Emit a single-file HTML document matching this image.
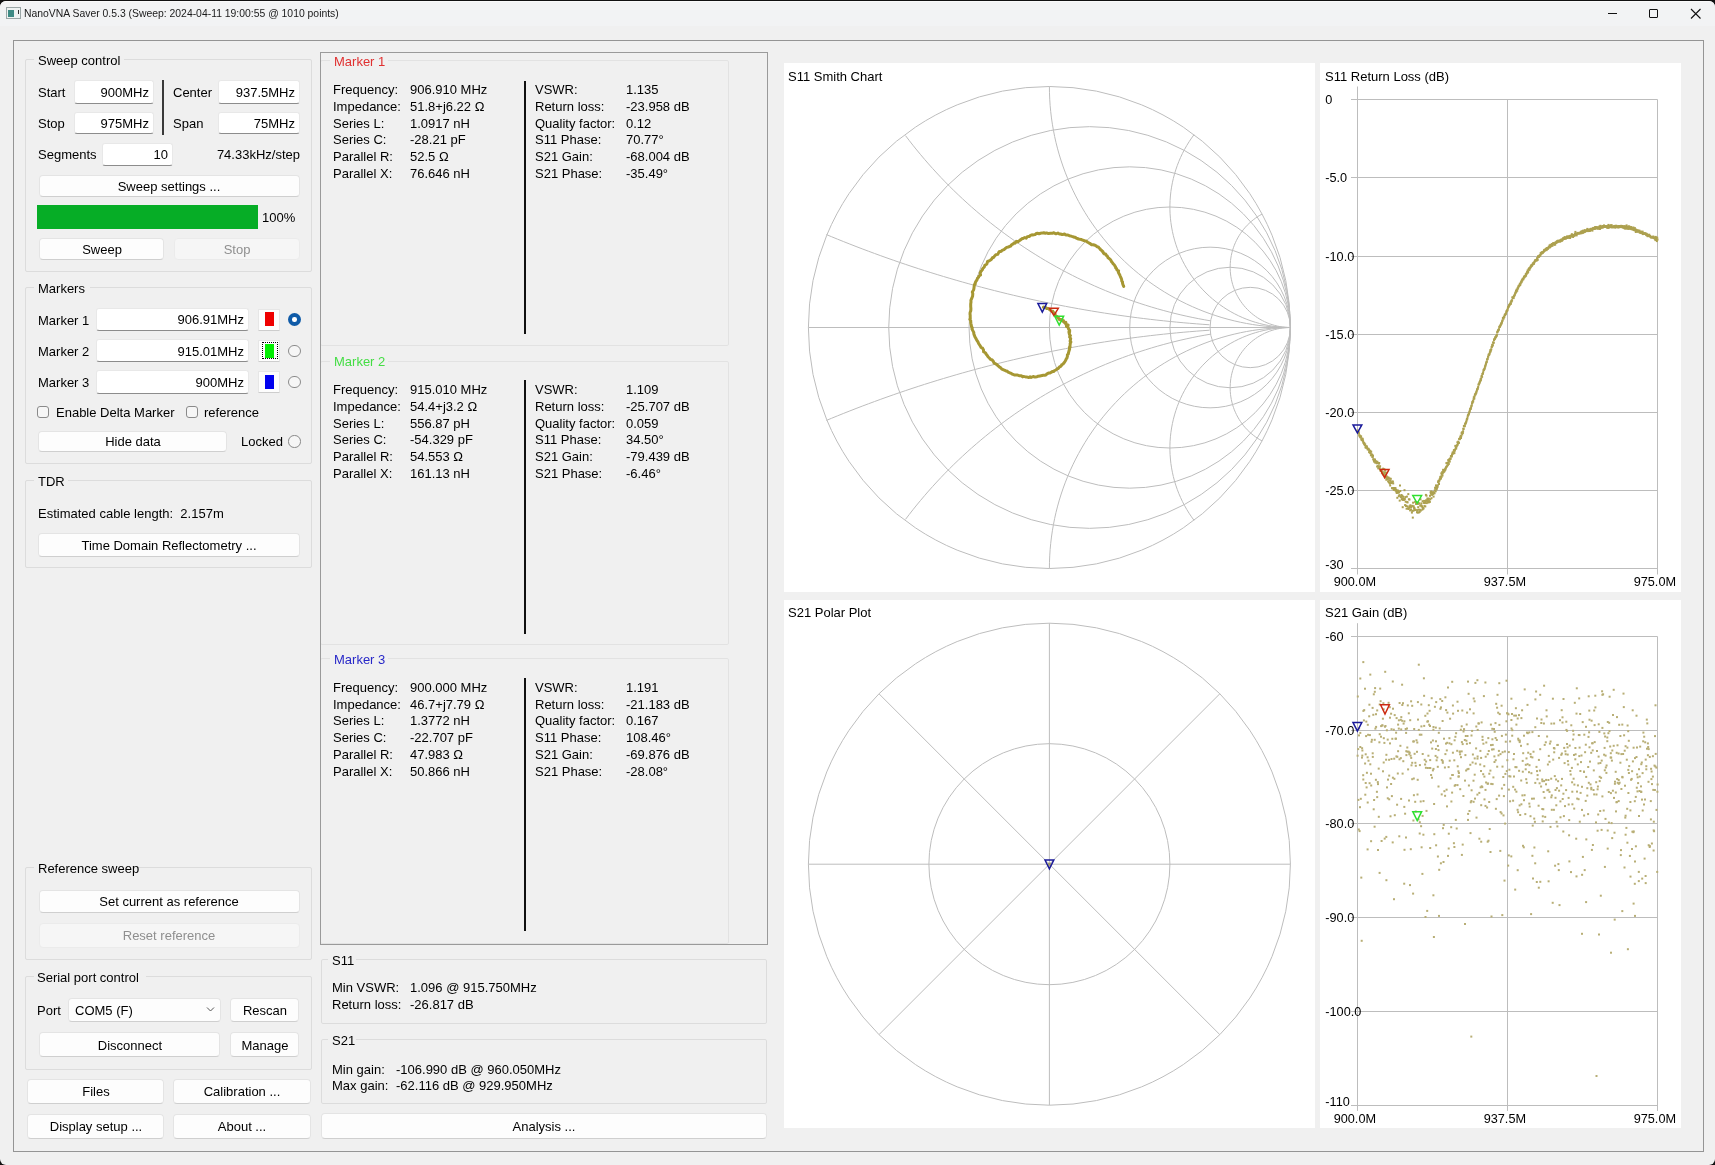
<!DOCTYPE html><html><head><meta charset="utf-8"><style>
html,body{margin:0;padding:0;width:1715px;height:1165px;overflow:hidden;background:#f0f0f0}
body{position:relative;font-family:"Liberation Sans", sans-serif;}
.t{position:absolute;white-space:nowrap;will-change:transform}
.b{position:absolute;}
</style></head><body>
<div class="b" style="left:0;top:0;width:1715px;height:1165px;background:#111"></div>
<div class="b" style="left:0;top:1px;width:1715px;height:1164px;background:#f0f0f0;border-radius:6px;overflow:hidden"><div style="height:1px;background:#fafafa"></div><div style="height:24px;background:#f2f3f4"></div></div>
<div class="b" style="left:6px;top:7px;width:15px;height:12px;background:#eef2f2;border:1px solid #9aa6a6;box-sizing:border-box;"></div>
<div class="b" style="left:8px;top:10px;width:6px;height:7px;background:#3d8a84;"></div>
<div class="b" style="left:18px;top:10px;width:1px;height:4px;background:#333;"></div>
<div class="t" style="left:24.3px;top:8.30px;font-size:10.4px;line-height:12px;color:#1a1a1a;">NanoVNA Saver 0.5.3 (Sweep: 2024-04-11 19:00:55 @ 1010 points)</div>
<div class="b" style="left:1608px;top:13px;width:9px;height:1px;background:#111;"></div>
<div class="b" style="left:1649px;top:9px;width:9px;height:9px;border:1.2px solid #111;border-radius:1px;box-sizing:border-box;"></div>
<svg class="b" style="left:1690px;top:8px" width="12" height="12"><path d="M1 1L10.5 10.5M10.5 1L1 10.5" stroke="#111" stroke-width="1.1"/></svg>
<div class="b" style="left:13px;top:40px;width:1691px;height:1112px;border:1px solid #949494;box-sizing:border-box;"></div>
<div class="b" style="left:25px;top:59px;width:287px;height:213px;border:1px solid #dcdcdc;border-radius:2px;box-sizing:border-box;"></div>
<div class="b" style="left:34px;top:57px;width:90px;height:5px;background:#f0f0f0;"></div>
<div class="t" style="left:37.5px;top:52.90px;font-size:13px;line-height:16px;color:#000;">Sweep control</div>
<div class="t" style="left:37.5px;top:84.90px;font-size:13px;line-height:16px;color:#000;">Start</div>
<div class="b" style="left:74px;top:80px;width:80px;height:24px;background:#fff;border:1px solid #e8e8e8;border-bottom:1px solid #8c8c8c;border-radius:3px;box-sizing:border-box;"></div>
<div class="t" style="left:-251.0px;width:400px;text-align:right;top:84.65px;font-size:13px;line-height:16px;color:#000;">900MHz</div>
<div class="t" style="left:37.5px;top:116.40px;font-size:13px;line-height:16px;color:#000;">Stop</div>
<div class="b" style="left:74px;top:112px;width:80px;height:22px;background:#fff;border:1px solid #e8e8e8;border-bottom:1px solid #8c8c8c;border-radius:3px;box-sizing:border-box;"></div>
<div class="t" style="left:-251.0px;width:400px;text-align:right;top:116.05px;font-size:13px;line-height:16px;color:#000;">975MHz</div>
<div class="b" style="left:162px;top:80px;width:2px;height:55px;background:#3a3a3a;"></div>
<div class="t" style="left:172.6px;top:84.90px;font-size:13px;line-height:16px;color:#000;">Center</div>
<div class="b" style="left:218px;top:80px;width:82px;height:24px;background:#fff;border:1px solid #e8e8e8;border-bottom:1px solid #8c8c8c;border-radius:3px;box-sizing:border-box;"></div>
<div class="t" style="left:-105.0px;width:400px;text-align:right;top:84.65px;font-size:13px;line-height:16px;color:#000;">937.5MHz</div>
<div class="t" style="left:172.6px;top:116.40px;font-size:13px;line-height:16px;color:#000;">Span</div>
<div class="b" style="left:218px;top:112px;width:82px;height:22px;background:#fff;border:1px solid #e8e8e8;border-bottom:1px solid #8c8c8c;border-radius:3px;box-sizing:border-box;"></div>
<div class="t" style="left:-105.0px;width:400px;text-align:right;top:116.05px;font-size:13px;line-height:16px;color:#000;">75MHz</div>
<div class="t" style="left:37.5px;top:147.20px;font-size:13px;line-height:16px;color:#000;">Segments</div>
<div class="b" style="left:102px;top:143px;width:71px;height:23px;background:#fff;border:1px solid #e8e8e8;border-bottom:1px solid #8c8c8c;border-radius:3px;box-sizing:border-box;"></div>
<div class="t" style="left:-232.0px;width:400px;text-align:right;top:147.20px;font-size:13px;line-height:16px;color:#000;">10</div>
<div class="t" style="left:-99.9px;width:400px;text-align:right;top:147.20px;font-size:13px;line-height:16px;color:#000;">74.33kHz/step</div>
<div class="b" style="left:39px;top:175px;width:261px;height:22px;background:#fdfdfd;border:1px solid #e4e4e4;border-bottom-color:#cfcfcf;border-radius:4px;box-sizing:border-box;"></div>
<div class="t" style="left:-30.9px;width:400px;text-align:center;top:178.70px;font-size:13px;line-height:16px;color:#000;">Sweep settings ...</div>
<div class="b" style="left:37px;top:205px;width:221px;height:24px;background:#06ad26;"></div>
<div class="t" style="left:262.0px;top:209.70px;font-size:13px;line-height:16px;color:#000;">100%</div>
<div class="b" style="left:39px;top:238px;width:125px;height:22px;background:#fdfdfd;border:1px solid #e4e4e4;border-bottom-color:#cfcfcf;border-radius:4px;box-sizing:border-box;"></div>
<div class="t" style="left:-98.3px;width:400px;text-align:center;top:241.50px;font-size:13px;line-height:16px;color:#000;">Sweep</div>
<div class="b" style="left:174px;top:238px;width:126px;height:22px;background:#f6f6f6;border:1px solid #ebebeb;border-radius:4px;box-sizing:border-box;"></div>
<div class="t" style="left:36.7px;width:400px;text-align:center;top:241.50px;font-size:13px;line-height:16px;color:#8f8f8f;">Stop</div>
<div class="b" style="left:25px;top:287px;width:287px;height:177px;border:1px solid #dcdcdc;border-radius:2px;box-sizing:border-box;"></div>
<div class="b" style="left:34px;top:285px;width:56px;height:5px;background:#f0f0f0;"></div>
<div class="t" style="left:37.5px;top:281.10px;font-size:13px;line-height:16px;color:#000;">Markers</div>
<div class="t" style="left:37.5px;top:312.90px;font-size:13px;line-height:16px;color:#000;">Marker 1</div>
<div class="b" style="left:96px;top:308px;width:153px;height:23px;background:#fff;border:1px solid #e8e8e8;border-bottom:1px solid #8c8c8c;border-radius:3px;box-sizing:border-box;"></div>
<div class="t" style="left:-155.7px;width:400px;text-align:right;top:312.45px;font-size:13px;line-height:16px;color:#000;">906.91MHz</div>
<div class="b" style="left:258px;top:309px;width:22px;height:22px;background:#fdfdfd;border:1px solid #e6e6e6;border-bottom-color:#cdcdcd;border-radius:1px;box-sizing:border-box;"></div>
<div class="b" style="left:265px;top:312px;width:9px;height:14px;background:#ee0000;"></div>
<div class="b" style="left:288.1px;top:313.1px;width:13px;height:13px;border-radius:50%;background:#0f5ba8;"></div>
<div class="b" style="left:292.3px;top:317.3px;width:4.6px;height:4.6px;border-radius:50%;background:#fff;"></div>
<div class="t" style="left:37.5px;top:344.20px;font-size:13px;line-height:16px;color:#000;">Marker 2</div>
<div class="b" style="left:96px;top:339px;width:153px;height:23px;background:#fff;border:1px solid #e8e8e8;border-bottom:1px solid #8c8c8c;border-radius:3px;box-sizing:border-box;"></div>
<div class="t" style="left:-155.7px;width:400px;text-align:right;top:343.65px;font-size:13px;line-height:16px;color:#000;">915.01MHz</div>
<div class="b" style="left:258px;top:340px;width:22px;height:22px;background:#fdfdfd;border:1px solid #e6e6e6;border-bottom-color:#cdcdcd;border-radius:1px;box-sizing:border-box;"></div>
<div class="b" style="left:265px;top:344px;width:9px;height:14px;background:#00ee00;"></div>
<div class="b" style="left:288.4px;top:344.7px;width:12.4px;height:12.4px;border-radius:50%;border:1px solid #8a8a8a;box-sizing:border-box;background:#f6f6f6"></div>
<div class="b" style="left:262px;top:342px;width:16px;height:17px;border:1px dotted #000;box-sizing:border-box;"></div>
<div class="t" style="left:37.5px;top:375.00px;font-size:13px;line-height:16px;color:#000;">Marker 3</div>
<div class="b" style="left:96px;top:370px;width:153px;height:24px;background:#fff;border:1px solid #e8e8e8;border-bottom:1px solid #8c8c8c;border-radius:3px;box-sizing:border-box;"></div>
<div class="t" style="left:-155.7px;width:400px;text-align:right;top:374.80px;font-size:13px;line-height:16px;color:#000;">900MHz</div>
<div class="b" style="left:258px;top:371px;width:22px;height:22px;background:#fdfdfd;border:1px solid #e6e6e6;border-bottom-color:#cdcdcd;border-radius:1px;box-sizing:border-box;"></div>
<div class="b" style="left:265px;top:375px;width:9px;height:14px;background:#0000ee;"></div>
<div class="b" style="left:288.4px;top:375.8px;width:12.4px;height:12.4px;border-radius:50%;border:1px solid #8a8a8a;box-sizing:border-box;background:#f6f6f6"></div>
<div class="b" style="left:37px;top:406px;width:12px;height:12px;border:1px solid #8a8a8a;border-radius:3px;box-sizing:border-box;background:#f6f6f6"></div>
<div class="t" style="left:55.5px;top:404.80px;font-size:13px;line-height:16px;color:#000;">Enable Delta Marker</div>
<div class="b" style="left:186px;top:406px;width:12px;height:12px;border:1px solid #8a8a8a;border-radius:3px;box-sizing:border-box;background:#f6f6f6"></div>
<div class="t" style="left:204.0px;top:404.80px;font-size:13px;line-height:16px;color:#000;">reference</div>
<div class="b" style="left:38px;top:431px;width:189px;height:21px;background:#fdfdfd;border:1px solid #e4e4e4;border-bottom-color:#cfcfcf;border-radius:4px;box-sizing:border-box;"></div>
<div class="t" style="left:-67.1px;width:400px;text-align:center;top:434.30px;font-size:13px;line-height:16px;color:#000;">Hide data</div>
<div class="t" style="left:241.3px;top:434.20px;font-size:13px;line-height:16px;color:#000;">Locked</div>
<div class="b" style="left:288.4px;top:435.2px;width:12.4px;height:12.4px;border-radius:50%;border:1px solid #8a8a8a;box-sizing:border-box;background:#f6f6f6"></div>
<div class="b" style="left:25px;top:480px;width:287px;height:88px;border:1px solid #dcdcdc;border-radius:2px;box-sizing:border-box;"></div>
<div class="b" style="left:34px;top:478px;width:34px;height:5px;background:#f0f0f0;"></div>
<div class="t" style="left:37.8px;top:473.50px;font-size:13px;line-height:16px;color:#000;">TDR</div>
<div class="t" style="left:37.8px;top:506.00px;font-size:13px;line-height:16px;color:#000;">Estimated cable length:&nbsp; 2.157m</div>
<div class="b" style="left:38px;top:533px;width:262px;height:24px;background:#fdfdfd;border:1px solid #e4e4e4;border-bottom-color:#cfcfcf;border-radius:4px;box-sizing:border-box;"></div>
<div class="t" style="left:-31.0px;width:400px;text-align:center;top:538.00px;font-size:13px;line-height:16px;color:#000;">Time Domain Reflectometry ...</div>
<div class="b" style="left:25px;top:867px;width:287px;height:93px;border:1px solid #dcdcdc;border-radius:2px;box-sizing:border-box;"></div>
<div class="b" style="left:34px;top:865px;width:104px;height:5px;background:#f0f0f0;"></div>
<div class="t" style="left:37.7px;top:860.90px;font-size:13px;line-height:16px;color:#000;">Reference sweep</div>
<div class="b" style="left:39px;top:890px;width:261px;height:23px;background:#fdfdfd;border:1px solid #e4e4e4;border-bottom-color:#cfcfcf;border-radius:4px;box-sizing:border-box;"></div>
<div class="t" style="left:-30.8px;width:400px;text-align:center;top:894.35px;font-size:13px;line-height:16px;color:#000;">Set current as reference</div>
<div class="b" style="left:39px;top:923px;width:261px;height:25px;background:#f6f6f6;border:1px solid #ebebeb;border-radius:4px;box-sizing:border-box;"></div>
<div class="t" style="left:-30.8px;width:400px;text-align:center;top:928.45px;font-size:13px;line-height:16px;color:#8f8f8f;">Reset reference</div>
<div class="b" style="left:25px;top:976px;width:287px;height:94px;border:1px solid #dcdcdc;border-radius:2px;box-sizing:border-box;"></div>
<div class="b" style="left:34px;top:974px;width:112px;height:5px;background:#f0f0f0;"></div>
<div class="t" style="left:37.2px;top:970.10px;font-size:13px;line-height:16px;color:#000;">Serial port control</div>
<div class="t" style="left:37.2px;top:1003.10px;font-size:13px;line-height:16px;color:#000;">Port</div>
<div class="b" style="left:68px;top:998px;width:153px;height:24px;background:#fdfdfd;border:1px solid #e4e4e4;border-bottom-color:#cfcfcf;border-radius:4px;box-sizing:border-box;"></div>
<div class="t" style="left:74.6px;top:1003.10px;font-size:13px;line-height:16px;color:#000;">COM5 (F)</div>
<svg class="b" style="left:206px;top:1006px" width="10" height="7"><path d="M1 1.5L4.5 5L8 1.5" stroke="#555" stroke-width="1" fill="none"/></svg>
<div class="b" style="left:230px;top:998px;width:69px;height:24px;background:#fdfdfd;border:1px solid #e4e4e4;border-bottom-color:#cfcfcf;border-radius:4px;box-sizing:border-box;"></div>
<div class="t" style="left:64.5px;width:400px;text-align:center;top:1003.05px;font-size:13px;line-height:16px;color:#000;">Rescan</div>
<div class="b" style="left:39px;top:1032px;width:181px;height:25px;background:#fdfdfd;border:1px solid #e4e4e4;border-bottom-color:#cfcfcf;border-radius:4px;box-sizing:border-box;"></div>
<div class="t" style="left:-70.4px;width:400px;text-align:center;top:1037.50px;font-size:13px;line-height:16px;color:#000;">Disconnect</div>
<div class="b" style="left:230px;top:1032px;width:69px;height:25px;background:#fdfdfd;border:1px solid #e4e4e4;border-bottom-color:#cfcfcf;border-radius:4px;box-sizing:border-box;"></div>
<div class="t" style="left:64.5px;width:400px;text-align:center;top:1037.50px;font-size:13px;line-height:16px;color:#000;">Manage</div>
<div class="b" style="left:27px;top:1079px;width:137px;height:25px;background:#fdfdfd;border:1px solid #e4e4e4;border-bottom-color:#cfcfcf;border-radius:4px;box-sizing:border-box;"></div>
<div class="t" style="left:-104.5px;width:400px;text-align:center;top:1084.40px;font-size:13px;line-height:16px;color:#000;">Files</div>
<div class="b" style="left:173px;top:1079px;width:138px;height:25px;background:#fdfdfd;border:1px solid #e4e4e4;border-bottom-color:#cfcfcf;border-radius:4px;box-sizing:border-box;"></div>
<div class="t" style="left:42.2px;width:400px;text-align:center;top:1084.40px;font-size:13px;line-height:16px;color:#000;">Calibration ...</div>
<div class="b" style="left:27px;top:1114px;width:137px;height:25px;background:#fdfdfd;border:1px solid #e4e4e4;border-bottom-color:#cfcfcf;border-radius:4px;box-sizing:border-box;"></div>
<div class="t" style="left:-104.5px;width:400px;text-align:center;top:1119.40px;font-size:13px;line-height:16px;color:#000;">Display setup ...</div>
<div class="b" style="left:173px;top:1114px;width:138px;height:25px;background:#fdfdfd;border:1px solid #e4e4e4;border-bottom-color:#cfcfcf;border-radius:4px;box-sizing:border-box;"></div>
<div class="t" style="left:42.2px;width:400px;text-align:center;top:1119.40px;font-size:13px;line-height:16px;color:#000;">About ...</div>
<div class="b" style="left:320px;top:60px;width:409px;height:286px;border:1px solid #e2e2e2;border-radius:2px;box-sizing:border-box;"></div>
<div class="b" style="left:330px;top:58px;width:58px;height:5px;background:#f0f0f0;"></div>
<div class="t" style="left:333.5px;top:53.90px;font-size:13px;line-height:16px;color:#e03030;">Marker 1</div>
<div class="t" style="left:333.3px;top:82.20px;font-size:13px;line-height:16px;color:#000;">Frequency:</div>
<div class="t" style="left:410.1px;top:82.20px;font-size:13px;line-height:16px;color:#000;">906.910 MHz</div>
<div class="t" style="left:534.6px;top:82.20px;font-size:13px;line-height:16px;color:#000;">VSWR:</div>
<div class="t" style="left:625.7px;top:82.20px;font-size:13px;line-height:16px;color:#000;">1.135</div>
<div class="t" style="left:333.3px;top:98.95px;font-size:13px;line-height:16px;color:#000;">Impedance:</div>
<div class="t" style="left:410.1px;top:98.95px;font-size:13px;line-height:16px;color:#000;">51.8+j6.22 &Omega;</div>
<div class="t" style="left:534.6px;top:98.95px;font-size:13px;line-height:16px;color:#000;">Return loss:</div>
<div class="t" style="left:625.7px;top:98.95px;font-size:13px;line-height:16px;color:#000;">-23.958 dB</div>
<div class="t" style="left:333.3px;top:115.70px;font-size:13px;line-height:16px;color:#000;">Series L:</div>
<div class="t" style="left:410.1px;top:115.70px;font-size:13px;line-height:16px;color:#000;">1.0917 nH</div>
<div class="t" style="left:534.6px;top:115.70px;font-size:13px;line-height:16px;color:#000;">Quality factor:</div>
<div class="t" style="left:625.7px;top:115.70px;font-size:13px;line-height:16px;color:#000;">0.12</div>
<div class="t" style="left:333.3px;top:132.45px;font-size:13px;line-height:16px;color:#000;">Series C:</div>
<div class="t" style="left:410.1px;top:132.45px;font-size:13px;line-height:16px;color:#000;">-28.21 pF</div>
<div class="t" style="left:534.6px;top:132.45px;font-size:13px;line-height:16px;color:#000;">S11 Phase:</div>
<div class="t" style="left:625.7px;top:132.45px;font-size:13px;line-height:16px;color:#000;">70.77&deg;</div>
<div class="t" style="left:333.3px;top:149.20px;font-size:13px;line-height:16px;color:#000;">Parallel R:</div>
<div class="t" style="left:410.1px;top:149.20px;font-size:13px;line-height:16px;color:#000;">52.5 &Omega;</div>
<div class="t" style="left:534.6px;top:149.20px;font-size:13px;line-height:16px;color:#000;">S21 Gain:</div>
<div class="t" style="left:625.7px;top:149.20px;font-size:13px;line-height:16px;color:#000;">-68.004 dB</div>
<div class="t" style="left:333.3px;top:165.95px;font-size:13px;line-height:16px;color:#000;">Parallel X:</div>
<div class="t" style="left:410.1px;top:165.95px;font-size:13px;line-height:16px;color:#000;">76.646 nH</div>
<div class="t" style="left:534.6px;top:165.95px;font-size:13px;line-height:16px;color:#000;">S21 Phase:</div>
<div class="t" style="left:625.7px;top:165.95px;font-size:13px;line-height:16px;color:#000;">-35.49&deg;</div>
<div class="b" style="left:524px;top:81px;width:2px;height:253px;background:#111;"></div>
<div class="b" style="left:320px;top:361px;width:409px;height:284px;border:1px solid #e2e2e2;border-radius:2px;box-sizing:border-box;"></div>
<div class="b" style="left:330px;top:359px;width:58px;height:5px;background:#f0f0f0;"></div>
<div class="t" style="left:333.5px;top:353.70px;font-size:13px;line-height:16px;color:#44dd44;">Marker 2</div>
<div class="t" style="left:333.3px;top:382.00px;font-size:13px;line-height:16px;color:#000;">Frequency:</div>
<div class="t" style="left:410.1px;top:382.00px;font-size:13px;line-height:16px;color:#000;">915.010 MHz</div>
<div class="t" style="left:534.6px;top:382.00px;font-size:13px;line-height:16px;color:#000;">VSWR:</div>
<div class="t" style="left:625.7px;top:382.00px;font-size:13px;line-height:16px;color:#000;">1.109</div>
<div class="t" style="left:333.3px;top:398.75px;font-size:13px;line-height:16px;color:#000;">Impedance:</div>
<div class="t" style="left:410.1px;top:398.75px;font-size:13px;line-height:16px;color:#000;">54.4+j3.2 &Omega;</div>
<div class="t" style="left:534.6px;top:398.75px;font-size:13px;line-height:16px;color:#000;">Return loss:</div>
<div class="t" style="left:625.7px;top:398.75px;font-size:13px;line-height:16px;color:#000;">-25.707 dB</div>
<div class="t" style="left:333.3px;top:415.50px;font-size:13px;line-height:16px;color:#000;">Series L:</div>
<div class="t" style="left:410.1px;top:415.50px;font-size:13px;line-height:16px;color:#000;">556.87 pH</div>
<div class="t" style="left:534.6px;top:415.50px;font-size:13px;line-height:16px;color:#000;">Quality factor:</div>
<div class="t" style="left:625.7px;top:415.50px;font-size:13px;line-height:16px;color:#000;">0.059</div>
<div class="t" style="left:333.3px;top:432.25px;font-size:13px;line-height:16px;color:#000;">Series C:</div>
<div class="t" style="left:410.1px;top:432.25px;font-size:13px;line-height:16px;color:#000;">-54.329 pF</div>
<div class="t" style="left:534.6px;top:432.25px;font-size:13px;line-height:16px;color:#000;">S11 Phase:</div>
<div class="t" style="left:625.7px;top:432.25px;font-size:13px;line-height:16px;color:#000;">34.50&deg;</div>
<div class="t" style="left:333.3px;top:449.00px;font-size:13px;line-height:16px;color:#000;">Parallel R:</div>
<div class="t" style="left:410.1px;top:449.00px;font-size:13px;line-height:16px;color:#000;">54.553 &Omega;</div>
<div class="t" style="left:534.6px;top:449.00px;font-size:13px;line-height:16px;color:#000;">S21 Gain:</div>
<div class="t" style="left:625.7px;top:449.00px;font-size:13px;line-height:16px;color:#000;">-79.439 dB</div>
<div class="t" style="left:333.3px;top:465.75px;font-size:13px;line-height:16px;color:#000;">Parallel X:</div>
<div class="t" style="left:410.1px;top:465.75px;font-size:13px;line-height:16px;color:#000;">161.13 nH</div>
<div class="t" style="left:534.6px;top:465.75px;font-size:13px;line-height:16px;color:#000;">S21 Phase:</div>
<div class="t" style="left:625.7px;top:465.75px;font-size:13px;line-height:16px;color:#000;">-6.46&deg;</div>
<div class="b" style="left:524px;top:380px;width:2px;height:254px;background:#111;"></div>
<div class="b" style="left:320px;top:658px;width:409px;height:286px;border:1px solid #e2e2e2;border-radius:2px;box-sizing:border-box;"></div>
<div class="b" style="left:330px;top:656px;width:58px;height:5px;background:#f0f0f0;"></div>
<div class="t" style="left:333.5px;top:651.60px;font-size:13px;line-height:16px;color:#2828c8;">Marker 3</div>
<div class="t" style="left:333.3px;top:679.90px;font-size:13px;line-height:16px;color:#000;">Frequency:</div>
<div class="t" style="left:410.1px;top:679.90px;font-size:13px;line-height:16px;color:#000;">900.000 MHz</div>
<div class="t" style="left:534.6px;top:679.90px;font-size:13px;line-height:16px;color:#000;">VSWR:</div>
<div class="t" style="left:625.7px;top:679.90px;font-size:13px;line-height:16px;color:#000;">1.191</div>
<div class="t" style="left:333.3px;top:696.65px;font-size:13px;line-height:16px;color:#000;">Impedance:</div>
<div class="t" style="left:410.1px;top:696.65px;font-size:13px;line-height:16px;color:#000;">46.7+j7.79 &Omega;</div>
<div class="t" style="left:534.6px;top:696.65px;font-size:13px;line-height:16px;color:#000;">Return loss:</div>
<div class="t" style="left:625.7px;top:696.65px;font-size:13px;line-height:16px;color:#000;">-21.183 dB</div>
<div class="t" style="left:333.3px;top:713.40px;font-size:13px;line-height:16px;color:#000;">Series L:</div>
<div class="t" style="left:410.1px;top:713.40px;font-size:13px;line-height:16px;color:#000;">1.3772 nH</div>
<div class="t" style="left:534.6px;top:713.40px;font-size:13px;line-height:16px;color:#000;">Quality factor:</div>
<div class="t" style="left:625.7px;top:713.40px;font-size:13px;line-height:16px;color:#000;">0.167</div>
<div class="t" style="left:333.3px;top:730.15px;font-size:13px;line-height:16px;color:#000;">Series C:</div>
<div class="t" style="left:410.1px;top:730.15px;font-size:13px;line-height:16px;color:#000;">-22.707 pF</div>
<div class="t" style="left:534.6px;top:730.15px;font-size:13px;line-height:16px;color:#000;">S11 Phase:</div>
<div class="t" style="left:625.7px;top:730.15px;font-size:13px;line-height:16px;color:#000;">108.46&deg;</div>
<div class="t" style="left:333.3px;top:746.90px;font-size:13px;line-height:16px;color:#000;">Parallel R:</div>
<div class="t" style="left:410.1px;top:746.90px;font-size:13px;line-height:16px;color:#000;">47.983 &Omega;</div>
<div class="t" style="left:534.6px;top:746.90px;font-size:13px;line-height:16px;color:#000;">S21 Gain:</div>
<div class="t" style="left:625.7px;top:746.90px;font-size:13px;line-height:16px;color:#000;">-69.876 dB</div>
<div class="t" style="left:333.3px;top:763.65px;font-size:13px;line-height:16px;color:#000;">Parallel X:</div>
<div class="t" style="left:410.1px;top:763.65px;font-size:13px;line-height:16px;color:#000;">50.866 nH</div>
<div class="t" style="left:534.6px;top:763.65px;font-size:13px;line-height:16px;color:#000;">S21 Phase:</div>
<div class="t" style="left:625.7px;top:763.65px;font-size:13px;line-height:16px;color:#000;">-28.08&deg;</div>
<div class="b" style="left:524px;top:678px;width:2px;height:253px;background:#111;"></div>
<div class="b" style="left:320px;top:52px;width:448px;height:893px;border:1px solid #9a9a9a;box-sizing:border-box;"></div>
<div class="b" style="left:321px;top:959px;width:446px;height:65px;border:1px solid #dcdcdc;border-radius:2px;box-sizing:border-box;"></div>
<div class="b" style="left:328px;top:957px;width:28px;height:5px;background:#f0f0f0;"></div>
<div class="t" style="left:332.0px;top:953.10px;font-size:13px;line-height:16px;color:#000;">S11</div>
<div class="t" style="left:332.0px;top:980.40px;font-size:13px;line-height:16px;color:#000;">Min VSWR:</div>
<div class="t" style="left:410.3px;top:980.40px;font-size:13px;line-height:16px;color:#000;">1.096 @ 915.750MHz</div>
<div class="t" style="left:332.0px;top:997.40px;font-size:13px;line-height:16px;color:#000;">Return loss:</div>
<div class="t" style="left:410.3px;top:997.40px;font-size:13px;line-height:16px;color:#000;">-26.817 dB</div>
<div class="b" style="left:321px;top:1039px;width:446px;height:65px;border:1px solid #dcdcdc;border-radius:2px;box-sizing:border-box;"></div>
<div class="b" style="left:328px;top:1037px;width:28px;height:5px;background:#f0f0f0;"></div>
<div class="t" style="left:332.0px;top:1033.40px;font-size:13px;line-height:16px;color:#000;">S21</div>
<div class="t" style="left:332.0px;top:1061.50px;font-size:13px;line-height:16px;color:#000;">Min gain:</div>
<div class="t" style="left:396.3px;top:1061.50px;font-size:13px;line-height:16px;color:#000;">-106.990 dB @ 960.050MHz</div>
<div class="t" style="left:332.0px;top:1078.20px;font-size:13px;line-height:16px;color:#000;">Max gain:</div>
<div class="t" style="left:396.3px;top:1078.20px;font-size:13px;line-height:16px;color:#000;">-62.116 dB @ 929.950MHz</div>
<div class="b" style="left:321px;top:1113px;width:446px;height:26px;background:#fdfdfd;border:1px solid #e4e4e4;border-bottom-color:#cfcfcf;border-radius:4px;box-sizing:border-box;"></div>
<div class="t" style="left:344.0px;width:400px;text-align:center;top:1119.05px;font-size:13px;line-height:16px;color:#000;">Analysis ...</div>
<div class="b" style="left:784px;top:63px;width:531px;height:529px;background:#fff;"></div>
<div class="b" style="left:1320px;top:63px;width:361px;height:529px;background:#fff;"></div>
<div class="b" style="left:784px;top:600px;width:531px;height:528px;background:#fff;"></div>
<div class="b" style="left:1320px;top:600px;width:361px;height:528px;background:#fff;"></div>
<svg class="b" style="left:0;top:0" width="1715" height="1165" font-family="Liberation Sans, sans-serif"><defs><clipPath id="uc"><circle cx="1049.4" cy="327.5" r="241.6"/></clipPath></defs>
<g fill="none" stroke="#bdbdbd" stroke-width="1">
<circle cx="1049.4" cy="327.5" r="241.0"/>
<path d="M808.4000000000001 327.5H1290.4"/>
<circle cx="1089.57" cy="327.5" r="200.83"/>
<circle cx="1129.73" cy="327.5" r="160.67"/>
<circle cx="1169.90" cy="327.5" r="120.50"/>
<circle cx="1210.07" cy="327.5" r="80.33"/>
<circle cx="1230.15" cy="327.5" r="60.25"/>
<circle cx="1250.23" cy="327.5" r="40.17"/>
<path clip-path="url(#uc)" d="M1290.40 327.50L1287.74 327.56L1285.08 327.74L1282.43 328.03L1279.80 328.44L1277.19 328.97L1274.60 329.61L1272.05 330.36L1269.53 331.23L1267.05 332.21L1264.62 333.29L1262.24 334.49L1259.91 335.78L1257.64 337.18L1255.44 338.68L1253.31 340.27L1251.24 341.96L1249.26 343.73L1247.35 345.60L1245.53 347.54L1243.80 349.56L1242.16 351.66L1240.61 353.83L1239.16 356.06L1237.81 358.36L1236.56 360.71L1235.42 363.12L1234.38 365.57L1233.46 368.07L1232.64 370.60L1231.94 373.17L1231.35 375.77L1230.88 378.39L1230.53 381.03L1230.29 383.69L1230.17 386.35L1230.16 389.01L1230.28 391.67L1230.51 394.33L1230.86 396.97L1231.32 399.59L1231.91 402.19L1232.60 404.76L1233.41 407.30L1234.33 409.80L1235.36 412.26L1236.50 414.66L1237.74 417.02L1239.08 419.32L1240.53 421.56L1242.07 423.73L1243.71 425.83L1245.44 427.86L1247.26 429.80L1249.16 431.67L1251.14 433.45L1253.20 435.14L1255.33 436.74L1257.53 438.24L1259.79 439.65L1262.11 440.95"/>
<path clip-path="url(#uc)" d="M1290.40 327.50L1287.74 327.44L1285.08 327.26L1282.43 326.97L1279.80 326.56L1277.19 326.03L1274.60 325.39L1272.05 324.64L1269.53 323.77L1267.05 322.79L1264.62 321.71L1262.24 320.51L1259.91 319.22L1257.64 317.82L1255.44 316.32L1253.31 314.73L1251.24 313.04L1249.26 311.27L1247.35 309.40L1245.53 307.46L1243.80 305.44L1242.16 303.34L1240.61 301.17L1239.16 298.94L1237.81 296.64L1236.56 294.29L1235.42 291.88L1234.38 289.43L1233.46 286.93L1232.64 284.40L1231.94 281.83L1231.35 279.23L1230.88 276.61L1230.53 273.97L1230.29 271.31L1230.17 268.65L1230.16 265.99L1230.28 263.33L1230.51 260.67L1230.86 258.03L1231.32 255.41L1231.91 252.81L1232.60 250.24L1233.41 247.70L1234.33 245.20L1235.36 242.74L1236.50 240.34L1237.74 237.98L1239.08 235.68L1240.53 233.44L1242.07 231.27L1243.71 229.17L1245.44 227.14L1247.26 225.20L1249.16 223.33L1251.14 221.55L1253.20 219.86L1255.33 218.26L1257.53 216.76L1259.79 215.35L1262.11 214.05"/>
<path clip-path="url(#uc)" d="M1290.40 327.50L1285.95 327.58L1281.50 327.83L1277.07 328.24L1272.66 328.81L1268.27 329.55L1263.91 330.45L1259.58 331.51L1255.30 332.72L1251.07 334.10L1246.89 335.63L1242.77 337.31L1238.71 339.15L1234.73 341.13L1230.82 343.26L1226.99 345.53L1223.25 347.94L1219.60 350.49L1216.05 353.17L1212.60 355.99L1209.25 358.92L1206.02 361.98L1202.90 365.16L1199.90 368.44L1197.02 371.84L1194.27 375.34L1191.65 378.94L1189.17 382.64L1186.82 386.42L1184.62 390.29L1182.56 394.23L1180.65 398.25L1178.89 402.34L1177.28 406.49L1175.82 410.70L1174.52 414.95L1173.38 419.26L1172.40 423.60L1171.58 427.97L1170.92 432.38L1170.42 436.80L1170.09 441.24L1169.92 445.69L1169.92 450.14L1170.08 454.59L1170.41 459.03L1170.89 463.45L1171.55 467.85L1172.36 472.23L1173.34 476.57L1174.47 480.88L1175.77 485.14L1177.22 489.35L1178.82 493.50L1180.58 497.59L1182.48 501.61L1184.54 505.56L1186.73 509.43L1189.07 513.22L1191.55 516.91L1194.16 520.52"/>
<path clip-path="url(#uc)" d="M1290.40 327.50L1285.95 327.42L1281.50 327.17L1277.07 326.76L1272.66 326.19L1268.27 325.45L1263.91 324.55L1259.58 323.49L1255.30 322.28L1251.07 320.90L1246.89 319.37L1242.77 317.69L1238.71 315.85L1234.73 313.87L1230.82 311.74L1226.99 309.47L1223.25 307.06L1219.60 304.51L1216.05 301.83L1212.60 299.01L1209.25 296.08L1206.02 293.02L1202.90 289.84L1199.90 286.56L1197.02 283.16L1194.27 279.66L1191.65 276.06L1189.17 272.36L1186.82 268.58L1184.62 264.71L1182.56 260.77L1180.65 256.75L1178.89 252.66L1177.28 248.51L1175.82 244.30L1174.52 240.05L1173.38 235.74L1172.40 231.40L1171.58 227.03L1170.92 222.62L1170.42 218.20L1170.09 213.76L1169.92 209.31L1169.92 204.86L1170.08 200.41L1170.41 195.97L1170.89 191.55L1171.55 187.15L1172.36 182.77L1173.34 178.43L1174.47 174.12L1175.77 169.86L1177.22 165.65L1178.82 161.50L1180.58 157.41L1182.48 153.39L1184.54 149.44L1186.73 145.57L1189.07 141.78L1191.55 138.09L1194.16 134.48"/>
<path clip-path="url(#uc)" d="M1290.40 327.50L1284.09 327.58L1277.79 327.83L1271.49 328.24L1265.21 328.82L1258.94 329.56L1252.70 330.47L1246.48 331.54L1240.29 332.77L1234.14 334.16L1228.02 335.71L1221.95 337.42L1215.93 339.30L1209.95 341.32L1204.03 343.51L1198.17 345.85L1192.38 348.34L1186.65 350.98L1180.99 353.77L1175.40 356.71L1169.90 359.79L1164.48 363.01L1159.14 366.38L1153.90 369.89L1148.74 373.53L1143.69 377.30L1138.73 381.21L1133.88 385.24L1129.14 389.40L1124.51 393.68L1119.99 398.09L1115.58 402.61L1111.30 407.24L1107.14 411.98L1103.11 416.83L1099.20 421.79L1095.43 426.84L1091.79 432.00L1088.28 437.24L1084.91 442.58L1081.69 448.00L1078.61 453.50L1075.67 459.09L1072.88 464.75L1070.24 470.48L1067.75 476.27L1065.41 482.13L1063.22 488.05L1061.20 494.03L1059.32 500.05L1057.61 506.12L1056.06 512.24L1054.67 518.39L1053.44 524.58L1052.37 530.80L1051.46 537.04L1050.72 543.31L1050.14 549.59L1049.73 555.89L1049.48 562.19L1049.40 568.50"/>
<path clip-path="url(#uc)" d="M1290.40 327.50L1284.09 327.42L1277.79 327.17L1271.49 326.76L1265.21 326.18L1258.94 325.44L1252.70 324.53L1246.48 323.46L1240.29 322.23L1234.14 320.84L1228.02 319.29L1221.95 317.58L1215.93 315.70L1209.95 313.68L1204.03 311.49L1198.17 309.15L1192.38 306.66L1186.65 304.02L1180.99 301.23L1175.40 298.29L1169.90 295.21L1164.48 291.99L1159.14 288.62L1153.90 285.11L1148.74 281.47L1143.69 277.70L1138.73 273.79L1133.88 269.76L1129.14 265.60L1124.51 261.32L1119.99 256.91L1115.58 252.39L1111.30 247.76L1107.14 243.02L1103.11 238.17L1099.20 233.21L1095.43 228.16L1091.79 223.00L1088.28 217.76L1084.91 212.42L1081.69 207.00L1078.61 201.50L1075.67 195.91L1072.88 190.25L1070.24 184.52L1067.75 178.73L1065.41 172.87L1063.22 166.95L1061.20 160.97L1059.32 154.95L1057.61 148.88L1056.06 142.76L1054.67 136.61L1053.44 130.42L1052.37 124.20L1051.46 117.96L1050.72 111.69L1050.14 105.41L1049.73 99.11L1049.48 92.81L1049.40 86.50"/>
<path clip-path="url(#uc)" d="M1210.85 334.11L1204.84 335.16L1198.84 336.28L1192.86 337.47L1186.90 338.74L1180.95 340.09L1175.02 341.51L1169.11 343.01L1163.21 344.58L1157.34 346.23L1151.49 347.95L1145.66 349.75L1139.85 351.61L1134.07 353.56L1128.32 355.57L1122.59 357.66L1116.88 359.82L1111.21 362.05L1105.56 364.35L1099.94 366.73L1094.35 369.17L1088.80 371.69L1083.27 374.27L1077.78 376.93L1072.33 379.65L1066.90 382.45L1061.52 385.31L1056.17 388.24L1050.86 391.24L1045.59 394.30L1040.35 397.43L1035.16 400.63L1030.00 403.89L1024.89 407.22L1019.82 410.61L1014.80 414.07L1009.82 417.59L1004.88 421.17L999.99 424.81L995.15 428.52L990.35 432.28L985.60 436.11L980.90 440.00L976.25 443.94L971.65 447.95L967.10 452.01L962.60 456.13L958.16 460.30L953.76 464.54L949.43 468.82L945.14 473.16L940.91 477.56L936.74 482.01L932.63 486.51L928.57 491.06L924.57 495.67L920.63 500.32L916.74 505.02L912.92 509.78L909.16 514.58L905.46 519.43"/>
<path clip-path="url(#uc)" d="M1210.85 320.89L1204.84 319.84L1198.84 318.72L1192.86 317.53L1186.90 316.26L1180.95 314.91L1175.02 313.49L1169.11 311.99L1163.21 310.42L1157.34 308.77L1151.49 307.05L1145.66 305.25L1139.85 303.39L1134.07 301.44L1128.32 299.43L1122.59 297.34L1116.88 295.18L1111.21 292.95L1105.56 290.65L1099.94 288.27L1094.35 285.83L1088.80 283.31L1083.27 280.73L1077.78 278.07L1072.33 275.35L1066.90 272.55L1061.52 269.69L1056.17 266.76L1050.86 263.76L1045.59 260.70L1040.35 257.57L1035.16 254.37L1030.00 251.11L1024.89 247.78L1019.82 244.39L1014.80 240.93L1009.82 237.41L1004.88 233.83L999.99 230.19L995.15 226.48L990.35 222.72L985.60 218.89L980.90 215.00L976.25 211.06L971.65 207.05L967.10 202.99L962.60 198.87L958.16 194.70L953.76 190.46L949.43 186.18L945.14 181.84L940.91 177.44L936.74 172.99L932.63 168.49L928.57 163.94L924.57 159.33L920.63 154.68L916.74 149.98L912.92 145.22L909.16 140.42L905.46 135.57"/>
<path clip-path="url(#uc)" d="M1209.49 330.22L1202.90 330.68L1196.31 331.18L1189.73 331.71L1183.14 332.28L1176.56 332.89L1169.99 333.53L1163.41 334.21L1156.85 334.92L1150.28 335.67L1143.72 336.46L1137.17 337.28L1130.61 338.14L1124.07 339.04L1117.53 339.97L1110.99 340.93L1104.46 341.93L1097.93 342.97L1091.41 344.04L1084.90 345.15L1078.39 346.30L1071.89 347.48L1065.40 348.69L1058.91 349.94L1052.43 351.23L1045.96 352.55L1039.49 353.91L1033.03 355.31L1026.58 356.73L1020.14 358.20L1013.70 359.70L1007.28 361.23L1000.86 362.80L994.45 364.41L988.05 366.05L981.66 367.72L975.27 369.43L968.90 371.18L962.54 372.96L956.19 374.78L949.84 376.63L943.51 378.51L937.19 380.43L930.88 382.38L924.57 384.37L918.28 386.40L912.01 388.45L905.74 390.55L899.48 392.67L893.24 394.83L887.01 397.03L880.79 399.26L874.58 401.52L868.38 403.82L862.20 406.15L856.03 408.51L849.88 410.91L843.73 413.34L837.60 415.81L831.49 418.31L825.38 420.84"/>
<path clip-path="url(#uc)" d="M1209.49 324.78L1202.90 324.32L1196.31 323.82L1189.73 323.29L1183.14 322.72L1176.56 322.11L1169.99 321.47L1163.41 320.79L1156.85 320.08L1150.28 319.33L1143.72 318.54L1137.17 317.72L1130.61 316.86L1124.07 315.96L1117.53 315.03L1110.99 314.07L1104.46 313.07L1097.93 312.03L1091.41 310.96L1084.90 309.85L1078.39 308.70L1071.89 307.52L1065.40 306.31L1058.91 305.06L1052.43 303.77L1045.96 302.45L1039.49 301.09L1033.03 299.69L1026.58 298.27L1020.14 296.80L1013.70 295.30L1007.28 293.77L1000.86 292.20L994.45 290.59L988.05 288.95L981.66 287.28L975.27 285.57L968.90 283.82L962.54 282.04L956.19 280.22L949.84 278.37L943.51 276.49L937.19 274.57L930.88 272.62L924.57 270.63L918.28 268.60L912.01 266.55L905.74 264.45L899.48 262.33L893.24 260.17L887.01 257.97L880.79 255.74L874.58 253.48L868.38 251.18L862.20 248.85L856.03 246.49L849.88 244.09L843.73 241.66L837.60 239.19L831.49 236.69L825.38 234.16"/>
</g>
<path d="M1043.4 307.2L1043.6 307.4L1044.5 307.3L1046.1 307.8L1046.4 308.4L1047.8 308.6L1048.6 308.7L1049.3 309.4L1049.9 309.6L1050.7 310.6L1052.0 311.1L1052.8 311.3L1053.4 312.5L1054.3 312.8L1054.5 313.1L1055.1 313.7L1055.3 315.6L1055.6 316.2L1057.0 316.5L1057.6 317.4L1058.4 317.7L1058.4 318.1L1058.9 318.8L1059.5 319.7L1059.8 319.3L1060.7 319.4L1062.3 319.7L1062.1 320.7L1063.4 320.6L1063.7 321.4L1063.7 321.9L1064.5 322.1L1064.7 322.9L1065.8 322.3L1066.0 323.7L1065.7 323.8L1066.1 324.6L1066.6 324.3L1066.8 324.7L1067.1 325.0L1068.2 325.1L1066.5 326.4L1068.0 327.2L1068.2 327.8L1068.7 328.9L1068.6 329.3L1069.7 330.4L1068.9 331.9L1069.7 331.8L1069.1 333.0L1069.4 333.4L1069.4 334.6L1070.4 335.5L1069.6 336.9L1070.3 338.0L1070.7 338.7L1070.4 339.8L1070.1 341.1L1070.9 342.0L1070.4 342.9L1070.1 343.7L1070.2 344.7L1070.0 345.5L1070.1 347.1L1069.4 347.3L1069.6 349.6L1069.1 350.1L1068.9 351.5L1068.5 352.6L1068.4 353.6L1068.2 354.1L1067.4 354.9L1067.4 356.3L1067.3 356.7L1066.9 358.2L1066.4 358.6L1065.8 359.9L1065.7 360.2L1065.1 361.2L1064.2 362.6L1064.1 362.7L1063.1 364.0L1062.2 364.5L1061.8 364.7L1060.9 366.4L1060.1 366.4L1059.1 367.3L1058.3 368.5L1057.2 368.7L1055.9 370.0L1054.8 370.5L1054.2 370.8L1053.8 371.5L1052.7 371.4L1050.0 373.0L1049.8 373.1L1048.4 373.1L1047.0 373.8L1045.9 375.0L1044.7 375.2L1043.2 375.2L1042.1 375.6L1041.1 375.7L1039.9 375.9L1038.2 376.2L1037.0 376.7L1035.0 377.1L1033.2 376.5L1031.2 377.4L1030.1 376.7L1028.8 377.6L1026.6 376.9L1025.5 376.9L1023.4 376.4L1022.7 376.9L1021.3 375.8L1019.1 375.7L1017.0 374.9L1016.1 375.1L1014.2 374.9L1012.3 374.2L1011.2 373.4L1009.8 372.8L1008.2 372.2L1007.3 371.2L1005.5 370.7L1003.6 369.9L1002.0 369.2L1000.6 367.7L999.6 367.2L998.5 366.2L996.8 364.6L995.8 363.9L994.1 363.1L993.3 361.3L992.2 360.0L990.6 359.4L989.3 358.0L988.2 357.0L987.3 355.6L986.0 354.1L985.7 353.0L983.6 351.8L983.5 349.9L982.6 348.2L981.0 347.5L980.4 346.1L978.6 343.5L978.1 342.2L977.1 340.7L976.7 340.0L975.8 338.3L974.9 336.7L974.4 335.4L973.8 333.7L973.8 332.5L973.2 331.4L971.9 328.9L972.3 327.9L971.5 326.5L971.2 324.7L970.9 323.5L970.7 321.5L970.8 321.0L969.8 319.3L970.3 318.4L970.2 317.2L970.2 315.0L970.0 314.1L970.1 312.5L970.8 310.7L970.9 308.6L970.7 306.5L970.7 304.0L971.0 302.1L970.9 300.3L971.9 297.9L972.6 296.2L972.8 293.6L972.3 292.0L973.4 290.3L973.9 288.7L974.1 286.9L974.4 284.4L975.2 284.2L975.3 282.6L976.3 280.8L977.1 279.6L977.5 278.3L978.6 277.2L978.9 276.0L980.6 275.0L980.2 272.8L980.9 271.5L982.5 269.6L982.6 268.7L984.3 267.0L984.9 265.1L985.7 264.8L986.9 264.0L987.5 261.5L989.1 260.9L990.1 260.3L991.3 259.5L992.7 257.4L993.4 257.6L994.4 256.3L995.8 254.8L997.6 254.4L998.2 253.4L999.1 251.8L1001.3 251.2L1002.0 250.4L1004.0 249.7L1005.7 248.2L1006.7 247.4L1008.3 247.0L1010.5 246.2L1011.6 244.8L1013.2 243.9L1014.3 242.7L1015.3 243.1L1016.3 241.4L1017.8 241.9L1019.5 240.6L1020.0 240.1L1020.9 239.6L1022.3 238.5L1023.3 238.4L1024.4 237.6L1026.2 238.2L1027.0 236.9L1028.6 236.4L1029.4 236.5L1030.5 235.3L1031.9 234.8L1033.4 234.9L1035.3 234.5L1036.2 233.5L1037.5 233.3L1039.0 233.7L1040.6 233.2L1041.8 233.1L1043.8 232.7L1045.3 233.3L1046.6 232.9L1048.4 233.6L1050.7 233.3L1052.3 233.3L1053.8 232.7L1055.2 233.6L1055.9 233.8L1057.9 233.1L1058.7 233.6L1059.7 234.0L1060.5 234.0L1062.1 234.5L1063.2 234.4L1064.5 234.0L1065.8 234.9L1066.3 235.1L1067.4 234.9L1069.3 235.7L1071.1 236.1L1071.9 236.4L1074.4 237.2L1075.1 237.3L1076.4 238.1L1078.5 239.0L1080.2 239.3L1081.1 239.4L1082.0 239.9L1084.5 240.7L1086.0 241.0L1087.7 242.3L1089.0 243.0L1089.7 243.3L1091.6 244.8L1093.3 244.7L1095.0 245.2L1096.4 246.1L1097.0 246.7L1098.3 246.9L1099.2 248.1L1099.9 248.6L1100.7 249.8L1101.7 250.5L1102.5 251.5L1102.9 251.5L1103.4 253.0L1104.6 254.0L1105.6 254.1L1106.8 256.1L1107.3 256.1L1108.0 257.8L1109.0 258.4L1110.4 259.6L1111.0 260.5L1111.6 261.8L1112.7 263.0L1113.2 263.9L1114.3 264.8L1115.0 266.2L1115.5 266.8L1115.7 267.9L1116.6 268.7L1116.9 270.0L1118.6 270.9L1118.3 272.0L1118.6 272.9L1119.1 273.8L1119.9 275.3L1120.3 276.3L1120.9 277.6L1121.6 279.3L1121.8 281.1L1122.5 281.8L1122.6 283.7L1122.7 283.8L1123.3 285.6L1123.7 286.4" fill="none" stroke="#a69733" stroke-width="3.0" stroke-linecap="round" stroke-linejoin="round"/>
<path d="M1037.9 303.5H1046.7L1042.3 312.2Z" fill="none" stroke="#1a1a9a" stroke-width="1.5" stroke-linejoin="miter"/>
<path d="M1049.5 308.3H1058.3L1053.9 315.6Z" fill="none" stroke="#cc2a10" stroke-width="1.5" stroke-linejoin="miter"/>
<path d="M1054.8 316.3H1063.6L1059.2 325.0Z" fill="none" stroke="#30e030" stroke-width="1.5" stroke-linejoin="miter"/><g fill="none" stroke="#bdbdbd" stroke-width="1">
<circle cx="1049.4" cy="864.2" r="241.0"/>
<circle cx="1049.4" cy="864.2" r="120.5"/>
<path d="M808.4000000000001 864.2H1290.4M1049.4 623.2V1105.2"/>
<path d="M879.0 693.8L1219.8 1034.6M879.0 1034.6L1219.8 693.8"/>
</g>
<rect x="1047.9" y="862.7" width="3" height="3" fill="#a09a70"/>
<path d="M1045.0 860.0H1053.8L1049.4 868.8Z" fill="none" stroke="#1a1a9a" stroke-width="1.5" stroke-linejoin="miter"/><g fill="none" stroke="#bdbdbd" stroke-width="1">
<path d="M1357.5 86.5V574.5"/>
<path d="M1507.5 99.5V574.5"/>
<path d="M1657.5 99.5V574.5"/>
<path d="M1351 99.5H1657.5"/>
<path d="M1351 177.5H1657.5"/>
<path d="M1351 256.5H1657.5"/>
<path d="M1351 334.5H1657.5"/>
<path d="M1351 412.5H1657.5"/>
<path d="M1351 490.5H1657.5"/>
<path d="M1351 568.5H1657.5"/>
</g>
<text x="1325.3" y="103.8" font-size="12.7" text-anchor="start" fill="#000">0</text>
<text x="1325.3" y="181.8" font-size="12.7" text-anchor="start" fill="#000">-5.0</text>
<text x="1325.3" y="260.8" font-size="12.7" text-anchor="start" fill="#000">-10.0</text>
<text x="1325.3" y="338.8" font-size="12.7" text-anchor="start" fill="#000">-15.0</text>
<text x="1325.3" y="416.8" font-size="12.7" text-anchor="start" fill="#000">-20.0</text>
<text x="1325.3" y="494.8" font-size="12.7" text-anchor="start" fill="#000">-25.0</text>
<text x="1325.3" y="568.5" font-size="12.7" text-anchor="start" fill="#000">-30</text>
<text x="1333.7" y="586.2" font-size="12.7" text-anchor="start" fill="#000">900.0M</text>
<text x="1483.7" y="586.2" font-size="12.7" text-anchor="start" fill="#000">937.5M</text>
<text x="1633.7" y="586.2" font-size="12.7" text-anchor="start" fill="#000">975.0M</text>
<g fill="#ada150"><rect x="1356.5" y="429.5" width="2" height="2"/><rect x="1356.8" y="430.9" width="2" height="2"/><rect x="1357.1" y="430.8" width="2" height="2"/><rect x="1357.4" y="431.3" width="2" height="2"/><rect x="1357.7" y="431.3" width="2" height="2"/><rect x="1358.0" y="432.6" width="2" height="2"/><rect x="1358.3" y="434.5" width="2" height="2"/><rect x="1358.6" y="434.4" width="2" height="2"/><rect x="1358.9" y="435.6" width="2" height="2"/><rect x="1359.2" y="435.5" width="2" height="2"/><rect x="1359.5" y="436.2" width="2" height="2"/><rect x="1359.8" y="436.6" width="2" height="2"/><rect x="1360.1" y="435.3" width="2" height="2"/><rect x="1360.4" y="438.4" width="2" height="2"/><rect x="1360.7" y="438.6" width="2" height="2"/><rect x="1361.0" y="439.2" width="2" height="2"/><rect x="1361.3" y="437.5" width="2" height="2"/><rect x="1361.6" y="438.0" width="2" height="2"/><rect x="1361.9" y="439.4" width="2" height="2"/><rect x="1362.1" y="440.3" width="2" height="2"/><rect x="1362.4" y="441.6" width="2" height="2"/><rect x="1362.7" y="441.8" width="2" height="2"/><rect x="1363.0" y="442.8" width="2" height="2"/><rect x="1363.3" y="442.1" width="2" height="2"/><rect x="1363.6" y="443.5" width="2" height="2"/><rect x="1363.9" y="444.1" width="2" height="2"/><rect x="1364.2" y="443.4" width="2" height="2"/><rect x="1364.5" y="446.4" width="2" height="2"/><rect x="1364.8" y="445.6" width="2" height="2"/><rect x="1365.1" y="446.7" width="2" height="2"/><rect x="1365.4" y="445.2" width="2" height="2"/><rect x="1365.7" y="445.5" width="2" height="2"/><rect x="1366.0" y="446.3" width="2" height="2"/><rect x="1366.3" y="447.0" width="2" height="2"/><rect x="1366.6" y="448.3" width="2" height="2"/><rect x="1366.9" y="448.3" width="2" height="2"/><rect x="1367.2" y="448.0" width="2" height="2"/><rect x="1367.5" y="447.8" width="2" height="2"/><rect x="1367.8" y="448.7" width="2" height="2"/><rect x="1368.1" y="451.2" width="2" height="2"/><rect x="1368.4" y="449.3" width="2" height="2"/><rect x="1368.7" y="451.0" width="2" height="2"/><rect x="1369.0" y="451.7" width="2" height="2"/><rect x="1369.3" y="449.9" width="2" height="2"/><rect x="1369.6" y="452.2" width="2" height="2"/><rect x="1369.9" y="454.3" width="2" height="2"/><rect x="1370.2" y="450.7" width="2" height="2"/><rect x="1370.5" y="453.3" width="2" height="2"/><rect x="1370.8" y="454.1" width="2" height="2"/><rect x="1371.1" y="453.8" width="2" height="2"/><rect x="1371.4" y="456.0" width="2" height="2"/><rect x="1371.7" y="455.9" width="2" height="2"/><rect x="1372.0" y="454.6" width="2" height="2"/><rect x="1372.3" y="458.2" width="2" height="2"/><rect x="1372.6" y="458.5" width="2" height="2"/><rect x="1372.9" y="459.5" width="2" height="2"/><rect x="1373.2" y="460.7" width="2" height="2"/><rect x="1373.4" y="459.8" width="2" height="2"/><rect x="1373.7" y="460.0" width="2" height="2"/><rect x="1374.0" y="458.5" width="2" height="2"/><rect x="1374.3" y="461.7" width="2" height="2"/><rect x="1374.6" y="460.4" width="2" height="2"/><rect x="1374.9" y="461.1" width="2" height="2"/><rect x="1375.2" y="460.4" width="2" height="2"/><rect x="1375.5" y="461.2" width="2" height="2"/><rect x="1375.8" y="462.3" width="2" height="2"/><rect x="1376.1" y="465.5" width="2" height="2"/><rect x="1376.4" y="460.8" width="2" height="2"/><rect x="1376.7" y="462.0" width="2" height="2"/><rect x="1377.0" y="465.1" width="2" height="2"/><rect x="1377.3" y="467.4" width="2" height="2"/><rect x="1377.6" y="466.4" width="2" height="2"/><rect x="1377.9" y="462.7" width="2" height="2"/><rect x="1378.2" y="462.0" width="2" height="2"/><rect x="1378.5" y="467.2" width="2" height="2"/><rect x="1378.8" y="465.6" width="2" height="2"/><rect x="1379.1" y="465.3" width="2" height="2"/><rect x="1379.4" y="469.3" width="2" height="2"/><rect x="1379.7" y="469.9" width="2" height="2"/><rect x="1380.0" y="468.6" width="2" height="2"/><rect x="1380.3" y="469.1" width="2" height="2"/><rect x="1380.6" y="469.8" width="2" height="2"/><rect x="1380.9" y="472.3" width="2" height="2"/><rect x="1381.2" y="470.9" width="2" height="2"/><rect x="1381.5" y="471.1" width="2" height="2"/><rect x="1381.8" y="471.5" width="2" height="2"/><rect x="1382.1" y="467.7" width="2" height="2"/><rect x="1382.4" y="473.7" width="2" height="2"/><rect x="1382.7" y="473.4" width="2" height="2"/><rect x="1383.0" y="473.0" width="2" height="2"/><rect x="1383.3" y="468.2" width="2" height="2"/><rect x="1383.6" y="471.3" width="2" height="2"/><rect x="1383.9" y="474.8" width="2" height="2"/><rect x="1384.2" y="469.5" width="2" height="2"/><rect x="1384.4" y="473.4" width="2" height="2"/><rect x="1384.7" y="476.5" width="2" height="2"/><rect x="1385.0" y="471.7" width="2" height="2"/><rect x="1385.3" y="478.7" width="2" height="2"/><rect x="1385.6" y="476.7" width="2" height="2"/><rect x="1385.9" y="475.5" width="2" height="2"/><rect x="1386.2" y="477.1" width="2" height="2"/><rect x="1386.5" y="478.3" width="2" height="2"/><rect x="1386.8" y="477.5" width="2" height="2"/><rect x="1387.1" y="480.4" width="2" height="2"/><rect x="1387.4" y="476.4" width="2" height="2"/><rect x="1387.7" y="477.4" width="2" height="2"/><rect x="1388.0" y="481.5" width="2" height="2"/><rect x="1388.3" y="479.4" width="2" height="2"/><rect x="1388.6" y="477.5" width="2" height="2"/><rect x="1388.9" y="482.7" width="2" height="2"/><rect x="1389.2" y="484.5" width="2" height="2"/><rect x="1389.5" y="479.9" width="2" height="2"/><rect x="1389.8" y="477.8" width="2" height="2"/><rect x="1390.1" y="481.5" width="2" height="2"/><rect x="1390.4" y="481.9" width="2" height="2"/><rect x="1390.7" y="481.9" width="2" height="2"/><rect x="1391.0" y="487.1" width="2" height="2"/><rect x="1391.3" y="480.6" width="2" height="2"/><rect x="1391.6" y="487.5" width="2" height="2"/><rect x="1391.9" y="480.6" width="2" height="2"/><rect x="1392.2" y="482.4" width="2" height="2"/><rect x="1392.5" y="487.0" width="2" height="2"/><rect x="1392.8" y="488.9" width="2" height="2"/><rect x="1393.1" y="488.5" width="2" height="2"/><rect x="1393.4" y="487.3" width="2" height="2"/><rect x="1393.7" y="487.1" width="2" height="2"/><rect x="1394.0" y="487.6" width="2" height="2"/><rect x="1394.3" y="489.3" width="2" height="2"/><rect x="1394.6" y="487.3" width="2" height="2"/><rect x="1394.9" y="489.1" width="2" height="2"/><rect x="1395.2" y="490.5" width="2" height="2"/><rect x="1395.4" y="489.0" width="2" height="2"/><rect x="1395.7" y="491.9" width="2" height="2"/><rect x="1396.0" y="491.6" width="2" height="2"/><rect x="1396.3" y="496.8" width="2" height="2"/><rect x="1396.6" y="491.6" width="2" height="2"/><rect x="1396.9" y="489.5" width="2" height="2"/><rect x="1397.2" y="490.0" width="2" height="2"/><rect x="1397.5" y="491.6" width="2" height="2"/><rect x="1397.8" y="495.2" width="2" height="2"/><rect x="1398.1" y="491.2" width="2" height="2"/><rect x="1398.4" y="494.1" width="2" height="2"/><rect x="1398.7" y="499.6" width="2" height="2"/><rect x="1399.0" y="484.5" width="2" height="2"/><rect x="1399.3" y="490.0" width="2" height="2"/><rect x="1399.6" y="495.2" width="2" height="2"/><rect x="1399.9" y="496.2" width="2" height="2"/><rect x="1400.2" y="496.0" width="2" height="2"/><rect x="1400.5" y="494.0" width="2" height="2"/><rect x="1400.8" y="498.4" width="2" height="2"/><rect x="1401.1" y="497.4" width="2" height="2"/><rect x="1401.4" y="494.9" width="2" height="2"/><rect x="1401.7" y="506.2" width="2" height="2"/><rect x="1402.0" y="498.9" width="2" height="2"/><rect x="1402.3" y="495.9" width="2" height="2"/><rect x="1402.6" y="498.0" width="2" height="2"/><rect x="1402.9" y="497.9" width="2" height="2"/><rect x="1403.2" y="498.9" width="2" height="2"/><rect x="1403.5" y="489.2" width="2" height="2"/><rect x="1403.8" y="498.0" width="2" height="2"/><rect x="1404.1" y="504.1" width="2" height="2"/><rect x="1404.4" y="496.1" width="2" height="2"/><rect x="1404.7" y="500.7" width="2" height="2"/><rect x="1405.0" y="504.9" width="2" height="2"/><rect x="1405.3" y="504.9" width="2" height="2"/><rect x="1405.6" y="507.7" width="2" height="2"/><rect x="1405.9" y="495.6" width="2" height="2"/><rect x="1406.2" y="501.1" width="2" height="2"/><rect x="1406.5" y="501.4" width="2" height="2"/><rect x="1406.7" y="505.5" width="2" height="2"/><rect x="1407.0" y="507.5" width="2" height="2"/><rect x="1407.3" y="493.1" width="2" height="2"/><rect x="1407.6" y="508.0" width="2" height="2"/><rect x="1407.9" y="498.3" width="2" height="2"/><rect x="1408.2" y="506.8" width="2" height="2"/><rect x="1408.5" y="498.5" width="2" height="2"/><rect x="1408.8" y="505.3" width="2" height="2"/><rect x="1409.1" y="509.4" width="2" height="2"/><rect x="1409.4" y="504.3" width="2" height="2"/><rect x="1409.7" y="505.8" width="2" height="2"/><rect x="1410.0" y="508.4" width="2" height="2"/><rect x="1410.3" y="506.0" width="2" height="2"/><rect x="1410.6" y="505.2" width="2" height="2"/><rect x="1410.9" y="511.6" width="2" height="2"/><rect x="1411.2" y="509.9" width="2" height="2"/><rect x="1411.5" y="504.8" width="2" height="2"/><rect x="1411.8" y="516.6" width="2" height="2"/><rect x="1412.1" y="501.7" width="2" height="2"/><rect x="1412.4" y="509.7" width="2" height="2"/><rect x="1412.7" y="505.3" width="2" height="2"/><rect x="1413.0" y="506.9" width="2" height="2"/><rect x="1413.3" y="509.1" width="2" height="2"/><rect x="1413.6" y="507.3" width="2" height="2"/><rect x="1413.9" y="508.9" width="2" height="2"/><rect x="1414.2" y="500.8" width="2" height="2"/><rect x="1414.5" y="500.9" width="2" height="2"/><rect x="1414.8" y="508.9" width="2" height="2"/><rect x="1415.1" y="503.0" width="2" height="2"/><rect x="1415.4" y="502.8" width="2" height="2"/><rect x="1415.7" y="501.1" width="2" height="2"/><rect x="1416.0" y="511.1" width="2" height="2"/><rect x="1416.3" y="509.1" width="2" height="2"/><rect x="1416.6" y="511.7" width="2" height="2"/><rect x="1416.9" y="502.9" width="2" height="2"/><rect x="1417.2" y="506.2" width="2" height="2"/><rect x="1417.5" y="502.0" width="2" height="2"/><rect x="1417.7" y="508.7" width="2" height="2"/><rect x="1418.0" y="511.4" width="2" height="2"/><rect x="1418.3" y="502.6" width="2" height="2"/><rect x="1418.6" y="511.0" width="2" height="2"/><rect x="1418.9" y="508.8" width="2" height="2"/><rect x="1419.2" y="504.6" width="2" height="2"/><rect x="1419.5" y="498.3" width="2" height="2"/><rect x="1419.8" y="509.6" width="2" height="2"/><rect x="1420.1" y="504.3" width="2" height="2"/><rect x="1420.4" y="502.4" width="2" height="2"/><rect x="1420.7" y="505.5" width="2" height="2"/><rect x="1421.0" y="505.3" width="2" height="2"/><rect x="1421.3" y="508.6" width="2" height="2"/><rect x="1421.6" y="500.2" width="2" height="2"/><rect x="1421.9" y="506.9" width="2" height="2"/><rect x="1422.2" y="507.7" width="2" height="2"/><rect x="1422.5" y="507.3" width="2" height="2"/><rect x="1422.8" y="501.9" width="2" height="2"/><rect x="1423.1" y="499.9" width="2" height="2"/><rect x="1423.4" y="505.1" width="2" height="2"/><rect x="1423.7" y="502.1" width="2" height="2"/><rect x="1424.0" y="501.8" width="2" height="2"/><rect x="1424.3" y="505.4" width="2" height="2"/><rect x="1424.6" y="500.1" width="2" height="2"/><rect x="1424.9" y="493.9" width="2" height="2"/><rect x="1425.2" y="499.2" width="2" height="2"/><rect x="1425.5" y="494.7" width="2" height="2"/><rect x="1425.8" y="502.1" width="2" height="2"/><rect x="1426.1" y="500.4" width="2" height="2"/><rect x="1426.4" y="497.5" width="2" height="2"/><rect x="1426.7" y="498.9" width="2" height="2"/><rect x="1427.0" y="500.9" width="2" height="2"/><rect x="1427.3" y="498.5" width="2" height="2"/><rect x="1427.6" y="501.5" width="2" height="2"/><rect x="1427.9" y="497.6" width="2" height="2"/><rect x="1428.2" y="500.1" width="2" height="2"/><rect x="1428.5" y="500.9" width="2" height="2"/><rect x="1428.7" y="500.9" width="2" height="2"/><rect x="1429.0" y="494.8" width="2" height="2"/><rect x="1429.3" y="498.3" width="2" height="2"/><rect x="1429.6" y="491.2" width="2" height="2"/><rect x="1429.9" y="492.8" width="2" height="2"/><rect x="1430.2" y="490.4" width="2" height="2"/><rect x="1430.5" y="497.2" width="2" height="2"/><rect x="1430.8" y="491.4" width="2" height="2"/><rect x="1431.1" y="493.9" width="2" height="2"/><rect x="1431.4" y="493.1" width="2" height="2"/><rect x="1431.7" y="493.0" width="2" height="2"/><rect x="1432.0" y="491.3" width="2" height="2"/><rect x="1432.3" y="492.7" width="2" height="2"/><rect x="1432.6" y="495.6" width="2" height="2"/><rect x="1432.9" y="491.3" width="2" height="2"/><rect x="1433.2" y="491.9" width="2" height="2"/><rect x="1433.5" y="492.3" width="2" height="2"/><rect x="1433.8" y="489.3" width="2" height="2"/><rect x="1434.1" y="486.7" width="2" height="2"/><rect x="1434.4" y="487.6" width="2" height="2"/><rect x="1434.7" y="490.3" width="2" height="2"/><rect x="1435.0" y="484.4" width="2" height="2"/><rect x="1435.3" y="485.9" width="2" height="2"/><rect x="1435.6" y="488.4" width="2" height="2"/><rect x="1435.9" y="487.3" width="2" height="2"/><rect x="1436.2" y="485.2" width="2" height="2"/><rect x="1436.5" y="486.1" width="2" height="2"/><rect x="1436.8" y="484.3" width="2" height="2"/><rect x="1437.1" y="481.2" width="2" height="2"/><rect x="1437.4" y="479.9" width="2" height="2"/><rect x="1437.7" y="480.9" width="2" height="2"/><rect x="1438.0" y="483.0" width="2" height="2"/><rect x="1438.3" y="479.8" width="2" height="2"/><rect x="1438.6" y="478.6" width="2" height="2"/><rect x="1438.9" y="478.1" width="2" height="2"/><rect x="1439.2" y="476.2" width="2" height="2"/><rect x="1439.5" y="477.9" width="2" height="2"/><rect x="1439.8" y="475.5" width="2" height="2"/><rect x="1440.0" y="477.3" width="2" height="2"/><rect x="1440.3" y="472.4" width="2" height="2"/><rect x="1440.6" y="475.9" width="2" height="2"/><rect x="1440.9" y="473.7" width="2" height="2"/><rect x="1441.2" y="471.1" width="2" height="2"/><rect x="1441.5" y="474.5" width="2" height="2"/><rect x="1441.8" y="472.3" width="2" height="2"/><rect x="1442.1" y="468.8" width="2" height="2"/><rect x="1442.4" y="470.1" width="2" height="2"/><rect x="1442.7" y="471.1" width="2" height="2"/><rect x="1443.0" y="469.4" width="2" height="2"/><rect x="1443.3" y="470.4" width="2" height="2"/><rect x="1443.6" y="469.7" width="2" height="2"/><rect x="1443.9" y="469.0" width="2" height="2"/><rect x="1444.2" y="467.8" width="2" height="2"/><rect x="1444.5" y="468.5" width="2" height="2"/><rect x="1444.8" y="467.0" width="2" height="2"/><rect x="1445.1" y="466.1" width="2" height="2"/><rect x="1445.4" y="462.1" width="2" height="2"/><rect x="1445.7" y="465.4" width="2" height="2"/><rect x="1446.0" y="465.3" width="2" height="2"/><rect x="1446.3" y="462.6" width="2" height="2"/><rect x="1446.6" y="461.8" width="2" height="2"/><rect x="1446.9" y="464.2" width="2" height="2"/><rect x="1447.2" y="459.1" width="2" height="2"/><rect x="1447.5" y="461.2" width="2" height="2"/><rect x="1447.8" y="463.0" width="2" height="2"/><rect x="1448.1" y="458.4" width="2" height="2"/><rect x="1448.4" y="459.7" width="2" height="2"/><rect x="1448.7" y="460.6" width="2" height="2"/><rect x="1449.0" y="457.6" width="2" height="2"/><rect x="1449.3" y="457.9" width="2" height="2"/><rect x="1449.6" y="457.7" width="2" height="2"/><rect x="1449.9" y="455.1" width="2" height="2"/><rect x="1450.2" y="455.4" width="2" height="2"/><rect x="1450.5" y="455.3" width="2" height="2"/><rect x="1450.8" y="455.3" width="2" height="2"/><rect x="1451.0" y="453.8" width="2" height="2"/><rect x="1451.3" y="453.1" width="2" height="2"/><rect x="1451.6" y="451.6" width="2" height="2"/><rect x="1451.9" y="451.8" width="2" height="2"/><rect x="1452.2" y="452.6" width="2" height="2"/><rect x="1452.5" y="451.2" width="2" height="2"/><rect x="1452.8" y="449.6" width="2" height="2"/><rect x="1453.1" y="449.0" width="2" height="2"/><rect x="1453.4" y="452.1" width="2" height="2"/><rect x="1453.7" y="449.9" width="2" height="2"/><rect x="1454.0" y="448.8" width="2" height="2"/><rect x="1454.3" y="444.9" width="2" height="2"/><rect x="1454.6" y="447.6" width="2" height="2"/><rect x="1454.9" y="446.9" width="2" height="2"/><rect x="1455.2" y="447.5" width="2" height="2"/><rect x="1455.5" y="445.6" width="2" height="2"/><rect x="1455.8" y="444.5" width="2" height="2"/><rect x="1456.1" y="444.4" width="2" height="2"/><rect x="1456.4" y="441.3" width="2" height="2"/><rect x="1456.7" y="443.7" width="2" height="2"/><rect x="1457.0" y="442.3" width="2" height="2"/><rect x="1457.3" y="440.6" width="2" height="2"/><rect x="1457.6" y="442.0" width="2" height="2"/><rect x="1457.9" y="441.8" width="2" height="2"/><rect x="1458.2" y="437.9" width="2" height="2"/><rect x="1458.5" y="437.9" width="2" height="2"/><rect x="1458.8" y="438.2" width="2" height="2"/><rect x="1459.1" y="437.3" width="2" height="2"/><rect x="1459.4" y="436.0" width="2" height="2"/><rect x="1459.7" y="434.7" width="2" height="2"/><rect x="1460.0" y="437.0" width="2" height="2"/><rect x="1460.3" y="435.2" width="2" height="2"/><rect x="1460.6" y="432.2" width="2" height="2"/><rect x="1460.9" y="431.3" width="2" height="2"/><rect x="1461.2" y="433.4" width="2" height="2"/><rect x="1461.5" y="432.0" width="2" height="2"/><rect x="1461.8" y="431.9" width="2" height="2"/><rect x="1462.1" y="430.2" width="2" height="2"/><rect x="1462.3" y="427.7" width="2" height="2"/><rect x="1462.6" y="428.0" width="2" height="2"/><rect x="1462.9" y="424.9" width="2" height="2"/><rect x="1463.2" y="425.4" width="2" height="2"/><rect x="1463.5" y="425.2" width="2" height="2"/><rect x="1463.8" y="424.9" width="2" height="2"/><rect x="1464.1" y="422.9" width="2" height="2"/><rect x="1464.4" y="422.6" width="2" height="2"/><rect x="1464.7" y="422.2" width="2" height="2"/><rect x="1465.0" y="421.3" width="2" height="2"/><rect x="1465.3" y="420.7" width="2" height="2"/><rect x="1465.6" y="419.4" width="2" height="2"/><rect x="1465.9" y="418.0" width="2" height="2"/><rect x="1466.2" y="418.2" width="2" height="2"/><rect x="1466.5" y="416.6" width="2" height="2"/><rect x="1466.8" y="414.9" width="2" height="2"/><rect x="1467.1" y="414.2" width="2" height="2"/><rect x="1467.4" y="413.9" width="2" height="2"/><rect x="1467.7" y="412.9" width="2" height="2"/><rect x="1468.0" y="412.3" width="2" height="2"/><rect x="1468.3" y="411.3" width="2" height="2"/><rect x="1468.6" y="410.5" width="2" height="2"/><rect x="1468.9" y="409.4" width="2" height="2"/><rect x="1469.2" y="407.7" width="2" height="2"/><rect x="1469.5" y="408.0" width="2" height="2"/><rect x="1469.8" y="407.6" width="2" height="2"/><rect x="1470.1" y="406.3" width="2" height="2"/><rect x="1470.4" y="404.9" width="2" height="2"/><rect x="1470.7" y="404.5" width="2" height="2"/><rect x="1471.0" y="402.7" width="2" height="2"/><rect x="1471.3" y="401.1" width="2" height="2"/><rect x="1471.6" y="401.6" width="2" height="2"/><rect x="1471.9" y="400.1" width="2" height="2"/><rect x="1472.2" y="400.4" width="2" height="2"/><rect x="1472.5" y="398.3" width="2" height="2"/><rect x="1472.8" y="396.3" width="2" height="2"/><rect x="1473.1" y="396.6" width="2" height="2"/><rect x="1473.3" y="397.6" width="2" height="2"/><rect x="1473.6" y="395.3" width="2" height="2"/><rect x="1473.9" y="393.8" width="2" height="2"/><rect x="1474.2" y="393.3" width="2" height="2"/><rect x="1474.5" y="393.4" width="2" height="2"/><rect x="1474.8" y="392.5" width="2" height="2"/><rect x="1475.1" y="391.4" width="2" height="2"/><rect x="1475.4" y="391.5" width="2" height="2"/><rect x="1475.7" y="390.0" width="2" height="2"/><rect x="1476.0" y="388.7" width="2" height="2"/><rect x="1476.3" y="388.2" width="2" height="2"/><rect x="1476.6" y="388.1" width="2" height="2"/><rect x="1476.9" y="386.8" width="2" height="2"/><rect x="1477.2" y="385.9" width="2" height="2"/><rect x="1477.5" y="383.6" width="2" height="2"/><rect x="1477.8" y="383.4" width="2" height="2"/><rect x="1478.1" y="383.1" width="2" height="2"/><rect x="1478.4" y="381.5" width="2" height="2"/><rect x="1478.7" y="381.6" width="2" height="2"/><rect x="1479.0" y="380.4" width="2" height="2"/><rect x="1479.3" y="379.8" width="2" height="2"/><rect x="1479.6" y="378.1" width="2" height="2"/><rect x="1479.9" y="379.2" width="2" height="2"/><rect x="1480.2" y="377.4" width="2" height="2"/><rect x="1480.5" y="375.5" width="2" height="2"/><rect x="1480.8" y="374.9" width="2" height="2"/><rect x="1481.1" y="375.8" width="2" height="2"/><rect x="1481.4" y="372.9" width="2" height="2"/><rect x="1481.7" y="372.9" width="2" height="2"/><rect x="1482.0" y="372.1" width="2" height="2"/><rect x="1482.3" y="370.6" width="2" height="2"/><rect x="1482.6" y="368.9" width="2" height="2"/><rect x="1482.9" y="369.0" width="2" height="2"/><rect x="1483.2" y="368.3" width="2" height="2"/><rect x="1483.5" y="367.9" width="2" height="2"/><rect x="1483.8" y="366.8" width="2" height="2"/><rect x="1484.1" y="365.5" width="2" height="2"/><rect x="1484.3" y="365.2" width="2" height="2"/><rect x="1484.6" y="364.1" width="2" height="2"/><rect x="1484.9" y="363.0" width="2" height="2"/><rect x="1485.2" y="362.0" width="2" height="2"/><rect x="1485.5" y="360.9" width="2" height="2"/><rect x="1485.8" y="360.7" width="2" height="2"/><rect x="1486.1" y="358.7" width="2" height="2"/><rect x="1486.4" y="358.1" width="2" height="2"/><rect x="1486.7" y="357.7" width="2" height="2"/><rect x="1487.0" y="355.8" width="2" height="2"/><rect x="1487.3" y="355.6" width="2" height="2"/><rect x="1487.6" y="353.7" width="2" height="2"/><rect x="1487.9" y="353.7" width="2" height="2"/><rect x="1488.2" y="353.8" width="2" height="2"/><rect x="1488.5" y="352.9" width="2" height="2"/><rect x="1488.8" y="351.6" width="2" height="2"/><rect x="1489.1" y="350.7" width="2" height="2"/><rect x="1489.4" y="349.0" width="2" height="2"/><rect x="1489.7" y="350.4" width="2" height="2"/><rect x="1490.0" y="348.7" width="2" height="2"/><rect x="1490.3" y="348.3" width="2" height="2"/><rect x="1490.6" y="346.1" width="2" height="2"/><rect x="1490.9" y="345.8" width="2" height="2"/><rect x="1491.2" y="343.8" width="2" height="2"/><rect x="1491.5" y="344.8" width="2" height="2"/><rect x="1491.8" y="344.1" width="2" height="2"/><rect x="1492.1" y="341.4" width="2" height="2"/><rect x="1492.4" y="341.9" width="2" height="2"/><rect x="1492.7" y="341.6" width="2" height="2"/><rect x="1493.0" y="339.1" width="2" height="2"/><rect x="1493.3" y="338.3" width="2" height="2"/><rect x="1493.6" y="338.1" width="2" height="2"/><rect x="1493.9" y="337.7" width="2" height="2"/><rect x="1494.2" y="336.4" width="2" height="2"/><rect x="1494.5" y="336.6" width="2" height="2"/><rect x="1494.8" y="336.0" width="2" height="2"/><rect x="1495.1" y="335.6" width="2" height="2"/><rect x="1495.4" y="334.9" width="2" height="2"/><rect x="1495.6" y="334.7" width="2" height="2"/><rect x="1495.9" y="333.7" width="2" height="2"/><rect x="1496.2" y="331.3" width="2" height="2"/><rect x="1496.5" y="331.1" width="2" height="2"/><rect x="1496.8" y="330.0" width="2" height="2"/><rect x="1497.1" y="329.3" width="2" height="2"/><rect x="1497.4" y="329.3" width="2" height="2"/><rect x="1497.7" y="328.6" width="2" height="2"/><rect x="1498.0" y="328.2" width="2" height="2"/><rect x="1498.3" y="326.1" width="2" height="2"/><rect x="1498.6" y="325.6" width="2" height="2"/><rect x="1498.9" y="325.8" width="2" height="2"/><rect x="1499.2" y="325.0" width="2" height="2"/><rect x="1499.5" y="324.2" width="2" height="2"/><rect x="1499.8" y="323.7" width="2" height="2"/><rect x="1500.1" y="322.5" width="2" height="2"/><rect x="1500.4" y="322.8" width="2" height="2"/><rect x="1500.7" y="321.9" width="2" height="2"/><rect x="1501.0" y="320.9" width="2" height="2"/><rect x="1501.3" y="319.8" width="2" height="2"/><rect x="1501.6" y="319.4" width="2" height="2"/><rect x="1501.9" y="317.0" width="2" height="2"/><rect x="1502.2" y="317.5" width="2" height="2"/><rect x="1502.5" y="317.6" width="2" height="2"/><rect x="1502.8" y="315.8" width="2" height="2"/><rect x="1503.1" y="316.3" width="2" height="2"/><rect x="1503.4" y="315.6" width="2" height="2"/><rect x="1503.7" y="313.9" width="2" height="2"/><rect x="1504.0" y="314.0" width="2" height="2"/><rect x="1504.3" y="313.3" width="2" height="2"/><rect x="1504.6" y="313.2" width="2" height="2"/><rect x="1504.9" y="312.6" width="2" height="2"/><rect x="1505.2" y="311.5" width="2" height="2"/><rect x="1505.5" y="310.3" width="2" height="2"/><rect x="1505.8" y="310.1" width="2" height="2"/><rect x="1506.1" y="309.5" width="2" height="2"/><rect x="1506.4" y="309.4" width="2" height="2"/><rect x="1506.6" y="308.5" width="2" height="2"/><rect x="1506.9" y="307.1" width="2" height="2"/><rect x="1507.2" y="306.0" width="2" height="2"/><rect x="1507.5" y="306.1" width="2" height="2"/><rect x="1507.8" y="305.1" width="2" height="2"/><rect x="1508.1" y="304.2" width="2" height="2"/><rect x="1508.4" y="304.3" width="2" height="2"/><rect x="1508.7" y="303.4" width="2" height="2"/><rect x="1509.0" y="303.2" width="2" height="2"/><rect x="1509.3" y="302.8" width="2" height="2"/><rect x="1509.6" y="301.5" width="2" height="2"/><rect x="1509.9" y="302.8" width="2" height="2"/><rect x="1510.2" y="300.3" width="2" height="2"/><rect x="1510.5" y="300.6" width="2" height="2"/><rect x="1510.8" y="299.3" width="2" height="2"/><rect x="1511.1" y="299.4" width="2" height="2"/><rect x="1511.4" y="296.3" width="2" height="2"/><rect x="1511.7" y="296.8" width="2" height="2"/><rect x="1512.0" y="296.9" width="2" height="2"/><rect x="1512.3" y="296.5" width="2" height="2"/><rect x="1512.6" y="297.1" width="2" height="2"/><rect x="1512.9" y="295.1" width="2" height="2"/><rect x="1513.2" y="295.1" width="2" height="2"/><rect x="1513.5" y="294.2" width="2" height="2"/><rect x="1513.8" y="293.7" width="2" height="2"/><rect x="1514.1" y="292.8" width="2" height="2"/><rect x="1514.4" y="291.7" width="2" height="2"/><rect x="1514.7" y="291.6" width="2" height="2"/><rect x="1515.0" y="289.9" width="2" height="2"/><rect x="1515.3" y="290.9" width="2" height="2"/><rect x="1515.6" y="288.7" width="2" height="2"/><rect x="1515.9" y="289.0" width="2" height="2"/><rect x="1516.2" y="289.8" width="2" height="2"/><rect x="1516.5" y="287.6" width="2" height="2"/><rect x="1516.8" y="287.2" width="2" height="2"/><rect x="1517.1" y="287.4" width="2" height="2"/><rect x="1517.4" y="286.0" width="2" height="2"/><rect x="1517.6" y="284.9" width="2" height="2"/><rect x="1517.9" y="285.1" width="2" height="2"/><rect x="1518.2" y="284.8" width="2" height="2"/><rect x="1518.5" y="284.3" width="2" height="2"/><rect x="1518.8" y="282.8" width="2" height="2"/><rect x="1519.1" y="284.0" width="2" height="2"/><rect x="1519.4" y="283.4" width="2" height="2"/><rect x="1519.7" y="281.8" width="2" height="2"/><rect x="1520.0" y="281.4" width="2" height="2"/><rect x="1520.3" y="280.4" width="2" height="2"/><rect x="1520.6" y="281.2" width="2" height="2"/><rect x="1520.9" y="279.2" width="2" height="2"/><rect x="1521.2" y="279.7" width="2" height="2"/><rect x="1521.5" y="278.4" width="2" height="2"/><rect x="1521.8" y="277.7" width="2" height="2"/><rect x="1522.1" y="278.3" width="2" height="2"/><rect x="1522.4" y="278.2" width="2" height="2"/><rect x="1522.7" y="276.8" width="2" height="2"/><rect x="1523.0" y="275.8" width="2" height="2"/><rect x="1523.3" y="276.4" width="2" height="2"/><rect x="1523.6" y="275.3" width="2" height="2"/><rect x="1523.9" y="275.1" width="2" height="2"/><rect x="1524.2" y="275.5" width="2" height="2"/><rect x="1524.5" y="274.7" width="2" height="2"/><rect x="1524.8" y="273.1" width="2" height="2"/><rect x="1525.1" y="274.6" width="2" height="2"/><rect x="1525.4" y="272.6" width="2" height="2"/><rect x="1525.7" y="272.7" width="2" height="2"/><rect x="1526.0" y="271.2" width="2" height="2"/><rect x="1526.3" y="271.2" width="2" height="2"/><rect x="1526.6" y="269.5" width="2" height="2"/><rect x="1526.9" y="271.6" width="2" height="2"/><rect x="1527.2" y="270.8" width="2" height="2"/><rect x="1527.5" y="268.6" width="2" height="2"/><rect x="1527.8" y="267.9" width="2" height="2"/><rect x="1528.1" y="267.4" width="2" height="2"/><rect x="1528.4" y="268.9" width="2" height="2"/><rect x="1528.7" y="267.4" width="2" height="2"/><rect x="1528.9" y="267.2" width="2" height="2"/><rect x="1529.2" y="266.6" width="2" height="2"/><rect x="1529.5" y="266.3" width="2" height="2"/><rect x="1529.8" y="265.2" width="2" height="2"/><rect x="1530.1" y="265.6" width="2" height="2"/><rect x="1530.4" y="264.1" width="2" height="2"/><rect x="1530.7" y="264.7" width="2" height="2"/><rect x="1531.0" y="264.5" width="2" height="2"/><rect x="1531.3" y="264.2" width="2" height="2"/><rect x="1531.6" y="263.3" width="2" height="2"/><rect x="1531.9" y="262.5" width="2" height="2"/><rect x="1532.2" y="262.8" width="2" height="2"/><rect x="1532.5" y="261.9" width="2" height="2"/><rect x="1532.8" y="263.0" width="2" height="2"/><rect x="1533.1" y="262.0" width="2" height="2"/><rect x="1533.4" y="261.0" width="2" height="2"/><rect x="1533.7" y="260.4" width="2" height="2"/><rect x="1534.0" y="259.8" width="2" height="2"/><rect x="1534.3" y="259.3" width="2" height="2"/><rect x="1534.6" y="259.3" width="2" height="2"/><rect x="1534.9" y="259.4" width="2" height="2"/><rect x="1535.2" y="259.1" width="2" height="2"/><rect x="1535.5" y="258.8" width="2" height="2"/><rect x="1535.8" y="259.5" width="2" height="2"/><rect x="1536.1" y="257.2" width="2" height="2"/><rect x="1536.4" y="257.3" width="2" height="2"/><rect x="1536.7" y="258.9" width="2" height="2"/><rect x="1537.0" y="255.3" width="2" height="2"/><rect x="1537.3" y="255.8" width="2" height="2"/><rect x="1537.6" y="256.0" width="2" height="2"/><rect x="1537.9" y="255.6" width="2" height="2"/><rect x="1538.2" y="255.4" width="2" height="2"/><rect x="1538.5" y="254.6" width="2" height="2"/><rect x="1538.8" y="254.7" width="2" height="2"/><rect x="1539.1" y="254.2" width="2" height="2"/><rect x="1539.4" y="254.3" width="2" height="2"/><rect x="1539.7" y="252.1" width="2" height="2"/><rect x="1539.9" y="252.5" width="2" height="2"/><rect x="1540.2" y="252.8" width="2" height="2"/><rect x="1540.5" y="251.8" width="2" height="2"/><rect x="1540.8" y="251.4" width="2" height="2"/><rect x="1541.1" y="252.3" width="2" height="2"/><rect x="1541.4" y="251.1" width="2" height="2"/><rect x="1541.7" y="251.7" width="2" height="2"/><rect x="1542.0" y="251.5" width="2" height="2"/><rect x="1542.3" y="250.9" width="2" height="2"/><rect x="1542.6" y="250.8" width="2" height="2"/><rect x="1542.9" y="250.1" width="2" height="2"/><rect x="1543.2" y="248.9" width="2" height="2"/><rect x="1543.5" y="249.6" width="2" height="2"/><rect x="1543.8" y="249.6" width="2" height="2"/><rect x="1544.1" y="248.7" width="2" height="2"/><rect x="1544.4" y="248.7" width="2" height="2"/><rect x="1544.7" y="249.1" width="2" height="2"/><rect x="1545.0" y="247.7" width="2" height="2"/><rect x="1545.3" y="248.5" width="2" height="2"/><rect x="1545.6" y="249.1" width="2" height="2"/><rect x="1545.9" y="247.2" width="2" height="2"/><rect x="1546.2" y="247.5" width="2" height="2"/><rect x="1546.5" y="247.0" width="2" height="2"/><rect x="1546.8" y="248.0" width="2" height="2"/><rect x="1547.1" y="246.9" width="2" height="2"/><rect x="1547.4" y="247.1" width="2" height="2"/><rect x="1547.7" y="245.8" width="2" height="2"/><rect x="1548.0" y="246.0" width="2" height="2"/><rect x="1548.3" y="245.8" width="2" height="2"/><rect x="1548.6" y="244.4" width="2" height="2"/><rect x="1548.9" y="246.4" width="2" height="2"/><rect x="1549.2" y="245.8" width="2" height="2"/><rect x="1549.5" y="243.8" width="2" height="2"/><rect x="1549.8" y="245.3" width="2" height="2"/><rect x="1550.1" y="244.5" width="2" height="2"/><rect x="1550.4" y="244.7" width="2" height="2"/><rect x="1550.7" y="244.5" width="2" height="2"/><rect x="1550.9" y="243.0" width="2" height="2"/><rect x="1551.2" y="243.7" width="2" height="2"/><rect x="1551.5" y="244.7" width="2" height="2"/><rect x="1551.8" y="243.1" width="2" height="2"/><rect x="1552.1" y="242.6" width="2" height="2"/><rect x="1552.4" y="242.2" width="2" height="2"/><rect x="1552.7" y="242.1" width="2" height="2"/><rect x="1553.0" y="243.0" width="2" height="2"/><rect x="1553.3" y="243.8" width="2" height="2"/><rect x="1553.6" y="242.7" width="2" height="2"/><rect x="1553.9" y="242.4" width="2" height="2"/><rect x="1554.2" y="243.6" width="2" height="2"/><rect x="1554.5" y="241.6" width="2" height="2"/><rect x="1554.8" y="241.3" width="2" height="2"/><rect x="1555.1" y="242.0" width="2" height="2"/><rect x="1555.4" y="241.8" width="2" height="2"/><rect x="1555.7" y="240.6" width="2" height="2"/><rect x="1556.0" y="240.3" width="2" height="2"/><rect x="1556.3" y="241.2" width="2" height="2"/><rect x="1556.6" y="241.0" width="2" height="2"/><rect x="1556.9" y="239.7" width="2" height="2"/><rect x="1557.2" y="240.4" width="2" height="2"/><rect x="1557.5" y="240.0" width="2" height="2"/><rect x="1557.8" y="240.5" width="2" height="2"/><rect x="1558.1" y="240.0" width="2" height="2"/><rect x="1558.4" y="239.9" width="2" height="2"/><rect x="1558.7" y="239.5" width="2" height="2"/><rect x="1559.0" y="240.4" width="2" height="2"/><rect x="1559.3" y="240.5" width="2" height="2"/><rect x="1559.6" y="239.1" width="2" height="2"/><rect x="1559.9" y="239.8" width="2" height="2"/><rect x="1560.2" y="238.6" width="2" height="2"/><rect x="1560.5" y="239.0" width="2" height="2"/><rect x="1560.8" y="239.3" width="2" height="2"/><rect x="1561.1" y="239.7" width="2" height="2"/><rect x="1561.4" y="238.3" width="2" height="2"/><rect x="1561.7" y="238.4" width="2" height="2"/><rect x="1562.0" y="238.4" width="2" height="2"/><rect x="1562.2" y="237.1" width="2" height="2"/><rect x="1562.5" y="238.0" width="2" height="2"/><rect x="1562.8" y="237.4" width="2" height="2"/><rect x="1563.1" y="238.0" width="2" height="2"/><rect x="1563.4" y="236.8" width="2" height="2"/><rect x="1563.7" y="236.1" width="2" height="2"/><rect x="1564.0" y="237.4" width="2" height="2"/><rect x="1564.3" y="237.4" width="2" height="2"/><rect x="1564.6" y="236.8" width="2" height="2"/><rect x="1564.9" y="237.6" width="2" height="2"/><rect x="1565.2" y="236.7" width="2" height="2"/><rect x="1565.5" y="236.3" width="2" height="2"/><rect x="1565.8" y="237.0" width="2" height="2"/><rect x="1566.1" y="235.4" width="2" height="2"/><rect x="1566.4" y="235.9" width="2" height="2"/><rect x="1566.7" y="236.3" width="2" height="2"/><rect x="1567.0" y="236.8" width="2" height="2"/><rect x="1567.3" y="235.9" width="2" height="2"/><rect x="1567.6" y="236.1" width="2" height="2"/><rect x="1567.9" y="235.3" width="2" height="2"/><rect x="1568.2" y="235.9" width="2" height="2"/><rect x="1568.5" y="236.7" width="2" height="2"/><rect x="1568.8" y="235.0" width="2" height="2"/><rect x="1569.1" y="237.0" width="2" height="2"/><rect x="1569.4" y="234.8" width="2" height="2"/><rect x="1569.7" y="235.1" width="2" height="2"/><rect x="1570.0" y="235.1" width="2" height="2"/><rect x="1570.3" y="235.6" width="2" height="2"/><rect x="1570.6" y="233.9" width="2" height="2"/><rect x="1570.9" y="233.2" width="2" height="2"/><rect x="1571.2" y="235.0" width="2" height="2"/><rect x="1571.5" y="235.0" width="2" height="2"/><rect x="1571.8" y="234.8" width="2" height="2"/><rect x="1572.1" y="236.0" width="2" height="2"/><rect x="1572.4" y="234.2" width="2" height="2"/><rect x="1572.7" y="234.2" width="2" height="2"/><rect x="1573.0" y="234.5" width="2" height="2"/><rect x="1573.2" y="234.0" width="2" height="2"/><rect x="1573.5" y="234.8" width="2" height="2"/><rect x="1573.8" y="232.7" width="2" height="2"/><rect x="1574.1" y="233.2" width="2" height="2"/><rect x="1574.4" y="230.9" width="2" height="2"/><rect x="1574.7" y="233.8" width="2" height="2"/><rect x="1575.0" y="232.9" width="2" height="2"/><rect x="1575.3" y="233.7" width="2" height="2"/><rect x="1575.6" y="234.4" width="2" height="2"/><rect x="1575.9" y="232.8" width="2" height="2"/><rect x="1576.2" y="232.5" width="2" height="2"/><rect x="1576.5" y="232.3" width="2" height="2"/><rect x="1576.8" y="231.9" width="2" height="2"/><rect x="1577.1" y="232.0" width="2" height="2"/><rect x="1577.4" y="232.7" width="2" height="2"/><rect x="1577.7" y="232.2" width="2" height="2"/><rect x="1578.0" y="232.1" width="2" height="2"/><rect x="1578.3" y="231.9" width="2" height="2"/><rect x="1578.6" y="232.5" width="2" height="2"/><rect x="1578.9" y="232.1" width="2" height="2"/><rect x="1579.2" y="231.6" width="2" height="2"/><rect x="1579.5" y="232.1" width="2" height="2"/><rect x="1579.8" y="231.4" width="2" height="2"/><rect x="1580.1" y="230.6" width="2" height="2"/><rect x="1580.4" y="232.3" width="2" height="2"/><rect x="1580.7" y="231.5" width="2" height="2"/><rect x="1581.0" y="230.4" width="2" height="2"/><rect x="1581.3" y="231.7" width="2" height="2"/><rect x="1581.6" y="231.1" width="2" height="2"/><rect x="1581.9" y="229.7" width="2" height="2"/><rect x="1582.2" y="231.8" width="2" height="2"/><rect x="1582.5" y="230.8" width="2" height="2"/><rect x="1582.8" y="231.1" width="2" height="2"/><rect x="1583.1" y="230.6" width="2" height="2"/><rect x="1583.4" y="230.2" width="2" height="2"/><rect x="1583.7" y="229.1" width="2" height="2"/><rect x="1584.0" y="230.8" width="2" height="2"/><rect x="1584.3" y="230.1" width="2" height="2"/><rect x="1584.5" y="229.7" width="2" height="2"/><rect x="1584.8" y="230.1" width="2" height="2"/><rect x="1585.1" y="229.8" width="2" height="2"/><rect x="1585.4" y="230.1" width="2" height="2"/><rect x="1585.7" y="229.3" width="2" height="2"/><rect x="1586.0" y="229.5" width="2" height="2"/><rect x="1586.3" y="227.9" width="2" height="2"/><rect x="1586.6" y="229.0" width="2" height="2"/><rect x="1586.9" y="229.7" width="2" height="2"/><rect x="1587.2" y="230.1" width="2" height="2"/><rect x="1587.5" y="228.8" width="2" height="2"/><rect x="1587.8" y="228.9" width="2" height="2"/><rect x="1588.1" y="230.0" width="2" height="2"/><rect x="1588.4" y="228.5" width="2" height="2"/><rect x="1588.7" y="229.2" width="2" height="2"/><rect x="1589.0" y="229.8" width="2" height="2"/><rect x="1589.3" y="228.5" width="2" height="2"/><rect x="1589.6" y="229.3" width="2" height="2"/><rect x="1589.9" y="227.8" width="2" height="2"/><rect x="1590.2" y="228.4" width="2" height="2"/><rect x="1590.5" y="228.1" width="2" height="2"/><rect x="1590.8" y="228.2" width="2" height="2"/><rect x="1591.1" y="228.8" width="2" height="2"/><rect x="1591.4" y="229.6" width="2" height="2"/><rect x="1591.7" y="227.4" width="2" height="2"/><rect x="1592.0" y="227.4" width="2" height="2"/><rect x="1592.3" y="228.0" width="2" height="2"/><rect x="1592.6" y="226.9" width="2" height="2"/><rect x="1592.9" y="227.9" width="2" height="2"/><rect x="1593.2" y="227.9" width="2" height="2"/><rect x="1593.5" y="227.2" width="2" height="2"/><rect x="1593.8" y="227.7" width="2" height="2"/><rect x="1594.1" y="226.1" width="2" height="2"/><rect x="1594.4" y="227.7" width="2" height="2"/><rect x="1594.7" y="226.0" width="2" height="2"/><rect x="1595.0" y="226.5" width="2" height="2"/><rect x="1595.3" y="226.6" width="2" height="2"/><rect x="1595.5" y="226.6" width="2" height="2"/><rect x="1595.8" y="227.4" width="2" height="2"/><rect x="1596.1" y="226.8" width="2" height="2"/><rect x="1596.4" y="226.4" width="2" height="2"/><rect x="1596.7" y="227.0" width="2" height="2"/><rect x="1597.0" y="227.7" width="2" height="2"/><rect x="1597.3" y="226.5" width="2" height="2"/><rect x="1597.6" y="226.7" width="2" height="2"/><rect x="1597.9" y="227.3" width="2" height="2"/><rect x="1598.2" y="226.5" width="2" height="2"/><rect x="1598.5" y="225.4" width="2" height="2"/><rect x="1598.8" y="228.0" width="2" height="2"/><rect x="1599.1" y="227.7" width="2" height="2"/><rect x="1599.4" y="224.8" width="2" height="2"/><rect x="1599.7" y="226.1" width="2" height="2"/><rect x="1600.0" y="226.4" width="2" height="2"/><rect x="1600.3" y="226.7" width="2" height="2"/><rect x="1600.6" y="226.5" width="2" height="2"/><rect x="1600.9" y="225.8" width="2" height="2"/><rect x="1601.2" y="225.2" width="2" height="2"/><rect x="1601.5" y="226.0" width="2" height="2"/><rect x="1601.8" y="226.6" width="2" height="2"/><rect x="1602.1" y="225.1" width="2" height="2"/><rect x="1602.4" y="225.1" width="2" height="2"/><rect x="1602.7" y="225.8" width="2" height="2"/><rect x="1603.0" y="224.4" width="2" height="2"/><rect x="1603.3" y="225.6" width="2" height="2"/><rect x="1603.6" y="225.4" width="2" height="2"/><rect x="1603.9" y="226.0" width="2" height="2"/><rect x="1604.2" y="225.2" width="2" height="2"/><rect x="1604.5" y="225.1" width="2" height="2"/><rect x="1604.8" y="225.4" width="2" height="2"/><rect x="1605.1" y="225.6" width="2" height="2"/><rect x="1605.4" y="225.2" width="2" height="2"/><rect x="1605.7" y="225.6" width="2" height="2"/><rect x="1606.0" y="226.2" width="2" height="2"/><rect x="1606.3" y="226.4" width="2" height="2"/><rect x="1606.5" y="226.8" width="2" height="2"/><rect x="1606.8" y="225.1" width="2" height="2"/><rect x="1607.1" y="225.3" width="2" height="2"/><rect x="1607.4" y="223.9" width="2" height="2"/><rect x="1607.7" y="226.9" width="2" height="2"/><rect x="1608.0" y="225.1" width="2" height="2"/><rect x="1608.3" y="225.6" width="2" height="2"/><rect x="1608.6" y="225.9" width="2" height="2"/><rect x="1608.9" y="224.6" width="2" height="2"/><rect x="1609.2" y="225.9" width="2" height="2"/><rect x="1609.5" y="225.5" width="2" height="2"/><rect x="1609.8" y="224.3" width="2" height="2"/><rect x="1610.1" y="225.8" width="2" height="2"/><rect x="1610.4" y="226.4" width="2" height="2"/><rect x="1610.7" y="224.2" width="2" height="2"/><rect x="1611.0" y="226.1" width="2" height="2"/><rect x="1611.3" y="225.7" width="2" height="2"/><rect x="1611.6" y="225.9" width="2" height="2"/><rect x="1611.9" y="225.8" width="2" height="2"/><rect x="1612.2" y="226.4" width="2" height="2"/><rect x="1612.5" y="225.4" width="2" height="2"/><rect x="1612.8" y="226.1" width="2" height="2"/><rect x="1613.1" y="225.2" width="2" height="2"/><rect x="1613.4" y="226.0" width="2" height="2"/><rect x="1613.7" y="224.9" width="2" height="2"/><rect x="1614.0" y="225.4" width="2" height="2"/><rect x="1614.3" y="226.7" width="2" height="2"/><rect x="1614.6" y="225.8" width="2" height="2"/><rect x="1614.9" y="225.4" width="2" height="2"/><rect x="1615.2" y="224.7" width="2" height="2"/><rect x="1615.5" y="225.0" width="2" height="2"/><rect x="1615.8" y="225.7" width="2" height="2"/><rect x="1616.1" y="226.2" width="2" height="2"/><rect x="1616.4" y="225.8" width="2" height="2"/><rect x="1616.7" y="225.9" width="2" height="2"/><rect x="1617.0" y="225.5" width="2" height="2"/><rect x="1617.3" y="226.5" width="2" height="2"/><rect x="1617.6" y="225.3" width="2" height="2"/><rect x="1617.8" y="225.2" width="2" height="2"/><rect x="1618.1" y="226.2" width="2" height="2"/><rect x="1618.4" y="225.6" width="2" height="2"/><rect x="1618.7" y="225.4" width="2" height="2"/><rect x="1619.0" y="225.2" width="2" height="2"/><rect x="1619.3" y="225.4" width="2" height="2"/><rect x="1619.6" y="226.1" width="2" height="2"/><rect x="1619.9" y="225.9" width="2" height="2"/><rect x="1620.2" y="224.8" width="2" height="2"/><rect x="1620.5" y="226.0" width="2" height="2"/><rect x="1620.8" y="225.8" width="2" height="2"/><rect x="1621.1" y="225.0" width="2" height="2"/><rect x="1621.4" y="226.3" width="2" height="2"/><rect x="1621.7" y="225.6" width="2" height="2"/><rect x="1622.0" y="225.6" width="2" height="2"/><rect x="1622.3" y="226.4" width="2" height="2"/><rect x="1622.6" y="226.8" width="2" height="2"/><rect x="1622.9" y="225.4" width="2" height="2"/><rect x="1623.2" y="226.2" width="2" height="2"/><rect x="1623.5" y="225.3" width="2" height="2"/><rect x="1623.8" y="227.6" width="2" height="2"/><rect x="1624.1" y="225.6" width="2" height="2"/><rect x="1624.4" y="226.9" width="2" height="2"/><rect x="1624.7" y="225.6" width="2" height="2"/><rect x="1625.0" y="226.7" width="2" height="2"/><rect x="1625.3" y="227.7" width="2" height="2"/><rect x="1625.6" y="224.4" width="2" height="2"/><rect x="1625.9" y="225.9" width="2" height="2"/><rect x="1626.2" y="226.6" width="2" height="2"/><rect x="1626.5" y="226.3" width="2" height="2"/><rect x="1626.8" y="225.9" width="2" height="2"/><rect x="1627.1" y="227.9" width="2" height="2"/><rect x="1627.4" y="226.6" width="2" height="2"/><rect x="1627.7" y="225.4" width="2" height="2"/><rect x="1628.0" y="227.2" width="2" height="2"/><rect x="1628.3" y="225.5" width="2" height="2"/><rect x="1628.6" y="227.6" width="2" height="2"/><rect x="1628.8" y="226.4" width="2" height="2"/><rect x="1629.1" y="227.0" width="2" height="2"/><rect x="1629.4" y="227.9" width="2" height="2"/><rect x="1629.7" y="227.2" width="2" height="2"/><rect x="1630.0" y="226.2" width="2" height="2"/><rect x="1630.3" y="226.1" width="2" height="2"/><rect x="1630.6" y="228.2" width="2" height="2"/><rect x="1630.9" y="228.0" width="2" height="2"/><rect x="1631.2" y="227.1" width="2" height="2"/><rect x="1631.5" y="228.3" width="2" height="2"/><rect x="1631.8" y="228.2" width="2" height="2"/><rect x="1632.1" y="228.4" width="2" height="2"/><rect x="1632.4" y="226.5" width="2" height="2"/><rect x="1632.7" y="228.0" width="2" height="2"/><rect x="1633.0" y="229.0" width="2" height="2"/><rect x="1633.3" y="229.0" width="2" height="2"/><rect x="1633.6" y="229.3" width="2" height="2"/><rect x="1633.9" y="227.1" width="2" height="2"/><rect x="1634.2" y="229.0" width="2" height="2"/><rect x="1634.5" y="229.4" width="2" height="2"/><rect x="1634.8" y="231.0" width="2" height="2"/><rect x="1635.1" y="228.6" width="2" height="2"/><rect x="1635.4" y="229.2" width="2" height="2"/><rect x="1635.7" y="229.6" width="2" height="2"/><rect x="1636.0" y="230.3" width="2" height="2"/><rect x="1636.3" y="229.5" width="2" height="2"/><rect x="1636.6" y="230.7" width="2" height="2"/><rect x="1636.9" y="229.5" width="2" height="2"/><rect x="1637.2" y="230.4" width="2" height="2"/><rect x="1637.5" y="229.9" width="2" height="2"/><rect x="1637.8" y="230.5" width="2" height="2"/><rect x="1638.1" y="230.1" width="2" height="2"/><rect x="1638.4" y="229.6" width="2" height="2"/><rect x="1638.7" y="231.6" width="2" height="2"/><rect x="1639.0" y="231.1" width="2" height="2"/><rect x="1639.3" y="230.7" width="2" height="2"/><rect x="1639.6" y="231.3" width="2" height="2"/><rect x="1639.8" y="232.0" width="2" height="2"/><rect x="1640.1" y="230.7" width="2" height="2"/><rect x="1640.4" y="231.5" width="2" height="2"/><rect x="1640.7" y="232.1" width="2" height="2"/><rect x="1641.0" y="232.2" width="2" height="2"/><rect x="1641.3" y="231.7" width="2" height="2"/><rect x="1641.6" y="230.6" width="2" height="2"/><rect x="1641.9" y="233.1" width="2" height="2"/><rect x="1642.2" y="232.5" width="2" height="2"/><rect x="1642.5" y="232.5" width="2" height="2"/><rect x="1642.8" y="232.4" width="2" height="2"/><rect x="1643.1" y="232.9" width="2" height="2"/><rect x="1643.4" y="232.5" width="2" height="2"/><rect x="1643.7" y="232.2" width="2" height="2"/><rect x="1644.0" y="232.6" width="2" height="2"/><rect x="1644.3" y="232.8" width="2" height="2"/><rect x="1644.6" y="232.9" width="2" height="2"/><rect x="1644.9" y="232.7" width="2" height="2"/><rect x="1645.2" y="234.0" width="2" height="2"/><rect x="1645.5" y="232.8" width="2" height="2"/><rect x="1645.8" y="234.3" width="2" height="2"/><rect x="1646.1" y="233.3" width="2" height="2"/><rect x="1646.4" y="234.4" width="2" height="2"/><rect x="1646.7" y="235.2" width="2" height="2"/><rect x="1647.0" y="234.5" width="2" height="2"/><rect x="1647.3" y="234.0" width="2" height="2"/><rect x="1647.6" y="234.7" width="2" height="2"/><rect x="1647.9" y="234.9" width="2" height="2"/><rect x="1648.2" y="233.7" width="2" height="2"/><rect x="1648.5" y="234.6" width="2" height="2"/><rect x="1648.8" y="235.3" width="2" height="2"/><rect x="1649.1" y="235.0" width="2" height="2"/><rect x="1649.4" y="235.5" width="2" height="2"/><rect x="1649.7" y="236.1" width="2" height="2"/><rect x="1650.0" y="236.2" width="2" height="2"/><rect x="1650.3" y="236.4" width="2" height="2"/><rect x="1650.6" y="236.3" width="2" height="2"/><rect x="1650.9" y="235.9" width="2" height="2"/><rect x="1651.1" y="236.2" width="2" height="2"/><rect x="1651.4" y="236.1" width="2" height="2"/><rect x="1651.7" y="236.2" width="2" height="2"/><rect x="1652.0" y="236.5" width="2" height="2"/><rect x="1652.3" y="235.5" width="2" height="2"/><rect x="1652.6" y="236.6" width="2" height="2"/><rect x="1652.9" y="237.0" width="2" height="2"/><rect x="1653.2" y="236.4" width="2" height="2"/><rect x="1653.5" y="237.2" width="2" height="2"/><rect x="1653.8" y="237.7" width="2" height="2"/><rect x="1654.1" y="237.4" width="2" height="2"/><rect x="1654.4" y="239.1" width="2" height="2"/><rect x="1654.7" y="235.9" width="2" height="2"/><rect x="1655.0" y="237.7" width="2" height="2"/><rect x="1655.3" y="236.7" width="2" height="2"/><rect x="1655.6" y="238.8" width="2" height="2"/><rect x="1655.9" y="240.1" width="2" height="2"/><rect x="1656.2" y="236.7" width="2" height="2"/><rect x="1656.5" y="238.6" width="2" height="2"/></g>
<path d="M1353.0 424.9H1361.8L1357.4 433.0Z" fill="none" stroke="#1a1a9a" stroke-width="1.5" stroke-linejoin="miter"/>
<path d="M1380.2 469.5H1389.0L1384.6 477.6Z" fill="none" stroke="#cc2a10" stroke-width="1.5" stroke-linejoin="miter"/>
<path d="M1412.8 495.6H1421.6L1417.2 503.3Z" fill="none" stroke="#30e030" stroke-width="1.5" stroke-linejoin="miter"/><g fill="none" stroke="#bdbdbd" stroke-width="1">
<path d="M1357.5 623.2V1110.9"/>
<path d="M1507.5 636.5V1110.9"/>
<path d="M1657.5 636.5V1110.9"/>
<path d="M1351 636.5H1657.5"/>
<path d="M1351 730.5H1657.5"/>
<path d="M1351 823.5H1657.5"/>
<path d="M1351 917.5H1657.5"/>
<path d="M1351 1011.5H1657.5"/>
<path d="M1351 1105.5H1657.5"/>
</g>
<text x="1325.3" y="640.8" font-size="12.7" text-anchor="start" fill="#000">-60</text>
<text x="1325.3" y="734.8" font-size="12.7" text-anchor="start" fill="#000">-70.0</text>
<text x="1325.3" y="827.8" font-size="12.7" text-anchor="start" fill="#000">-80.0</text>
<text x="1325.3" y="921.8" font-size="12.7" text-anchor="start" fill="#000">-90.0</text>
<text x="1325.3" y="1015.8" font-size="12.7" text-anchor="start" fill="#000">-100.0</text>
<text x="1325.3" y="1105.5" font-size="12.7" text-anchor="start" fill="#000">-110</text>
<text x="1333.7" y="1122.6" font-size="12.7" text-anchor="start" fill="#000">900.0M</text>
<text x="1483.7" y="1122.6" font-size="12.7" text-anchor="start" fill="#000">937.5M</text>
<text x="1633.7" y="1122.6" font-size="12.7" text-anchor="start" fill="#000">975.0M</text>
<g fill="#b8ae76"><rect x="1356.6" y="754.7" width="2" height="2"/><rect x="1356.8" y="695.5" width="2" height="2"/><rect x="1357.2" y="748.1" width="2" height="2"/><rect x="1357.4" y="798.9" width="2" height="2"/><rect x="1358.0" y="734.4" width="2" height="2"/><rect x="1357.8" y="828.5" width="2" height="2"/><rect x="1358.6" y="830.1" width="2" height="2"/><rect x="1358.1" y="727.4" width="2" height="2"/><rect x="1359.3" y="677.5" width="2" height="2"/><rect x="1359.3" y="731.9" width="2" height="2"/><rect x="1359.0" y="806.2" width="2" height="2"/><rect x="1359.3" y="746.0" width="2" height="2"/><rect x="1359.8" y="797.8" width="2" height="2"/><rect x="1360.3" y="876.6" width="2" height="2"/><rect x="1361.0" y="756.6" width="2" height="2"/><rect x="1361.1" y="747.2" width="2" height="2"/><rect x="1361.4" y="749.5" width="2" height="2"/><rect x="1361.3" y="754.6" width="2" height="2"/><rect x="1362.3" y="661.1" width="2" height="2"/><rect x="1362.4" y="709.9" width="2" height="2"/><rect x="1362.2" y="774.2" width="2" height="2"/><rect x="1362.3" y="778.5" width="2" height="2"/><rect x="1362.9" y="719.4" width="2" height="2"/><rect x="1363.2" y="709.1" width="2" height="2"/><rect x="1364.0" y="687.7" width="2" height="2"/><rect x="1364.3" y="793.7" width="2" height="2"/><rect x="1364.7" y="753.3" width="2" height="2"/><rect x="1364.1" y="762.5" width="2" height="2"/><rect x="1365.1" y="735.1" width="2" height="2"/><rect x="1364.7" y="782.0" width="2" height="2"/><rect x="1365.9" y="771.8" width="2" height="2"/><rect x="1365.3" y="720.6" width="2" height="2"/><rect x="1365.6" y="786.4" width="2" height="2"/><rect x="1366.6" y="848.4" width="2" height="2"/><rect x="1366.7" y="801.5" width="2" height="2"/><rect x="1366.6" y="756.3" width="2" height="2"/><rect x="1366.8" y="723.8" width="2" height="2"/><rect x="1367.1" y="733.8" width="2" height="2"/><rect x="1367.5" y="759.7" width="2" height="2"/><rect x="1368.6" y="782.2" width="2" height="2"/><rect x="1368.2" y="715.3" width="2" height="2"/><rect x="1368.4" y="703.7" width="2" height="2"/><rect x="1369.3" y="763.3" width="2" height="2"/><rect x="1368.9" y="734.1" width="2" height="2"/><rect x="1369.3" y="673.6" width="2" height="2"/><rect x="1370.2" y="784.5" width="2" height="2"/><rect x="1370.0" y="772.7" width="2" height="2"/><rect x="1370.1" y="840.2" width="2" height="2"/><rect x="1370.5" y="740.8" width="2" height="2"/><rect x="1370.9" y="738.8" width="2" height="2"/><rect x="1371.8" y="755.9" width="2" height="2"/><rect x="1371.7" y="752.3" width="2" height="2"/><rect x="1371.6" y="706.9" width="2" height="2"/><rect x="1372.7" y="808.3" width="2" height="2"/><rect x="1372.3" y="713.8" width="2" height="2"/><rect x="1373.1" y="799.0" width="2" height="2"/><rect x="1372.8" y="693.3" width="2" height="2"/><rect x="1373.8" y="690.8" width="2" height="2"/><rect x="1373.7" y="738.8" width="2" height="2"/><rect x="1373.6" y="825.7" width="2" height="2"/><rect x="1374.1" y="687.1" width="2" height="2"/><rect x="1374.4" y="727.6" width="2" height="2"/><rect x="1375.0" y="713.2" width="2" height="2"/><rect x="1374.9" y="778.8" width="2" height="2"/><rect x="1375.1" y="725.9" width="2" height="2"/><rect x="1375.9" y="790.8" width="2" height="2"/><rect x="1376.2" y="709.4" width="2" height="2"/><rect x="1376.8" y="781.1" width="2" height="2"/><rect x="1376.2" y="796.1" width="2" height="2"/><rect x="1377.0" y="783.1" width="2" height="2"/><rect x="1377.0" y="849.0" width="2" height="2"/><rect x="1377.7" y="767.6" width="2" height="2"/><rect x="1377.8" y="815.8" width="2" height="2"/><rect x="1378.7" y="703.5" width="2" height="2"/><rect x="1378.7" y="733.2" width="2" height="2"/><rect x="1378.4" y="741.3" width="2" height="2"/><rect x="1378.6" y="871.9" width="2" height="2"/><rect x="1379.6" y="700.2" width="2" height="2"/><rect x="1379.2" y="687.6" width="2" height="2"/><rect x="1380.0" y="735.7" width="2" height="2"/><rect x="1380.1" y="725.1" width="2" height="2"/><rect x="1380.6" y="840.0" width="2" height="2"/><rect x="1381.3" y="724.4" width="2" height="2"/><rect x="1381.4" y="724.4" width="2" height="2"/><rect x="1381.9" y="717.7" width="2" height="2"/><rect x="1382.0" y="770.3" width="2" height="2"/><rect x="1382.4" y="702.2" width="2" height="2"/><rect x="1382.7" y="761.5" width="2" height="2"/><rect x="1382.7" y="708.3" width="2" height="2"/><rect x="1382.8" y="737.2" width="2" height="2"/><rect x="1383.4" y="741.9" width="2" height="2"/><rect x="1383.7" y="837.6" width="2" height="2"/><rect x="1384.2" y="670.8" width="2" height="2"/><rect x="1384.0" y="725.7" width="2" height="2"/><rect x="1384.5" y="725.0" width="2" height="2"/><rect x="1385.1" y="758.7" width="2" height="2"/><rect x="1385.3" y="835.9" width="2" height="2"/><rect x="1385.4" y="879.2" width="2" height="2"/><rect x="1385.4" y="753.8" width="2" height="2"/><rect x="1385.9" y="729.3" width="2" height="2"/><rect x="1386.7" y="738.6" width="2" height="2"/><rect x="1386.0" y="786.4" width="2" height="2"/><rect x="1387.0" y="778.6" width="2" height="2"/><rect x="1386.8" y="797.3" width="2" height="2"/><rect x="1387.6" y="701.8" width="2" height="2"/><rect x="1388.1" y="758.8" width="2" height="2"/><rect x="1388.2" y="774.6" width="2" height="2"/><rect x="1388.2" y="798.3" width="2" height="2"/><rect x="1389.0" y="716.7" width="2" height="2"/><rect x="1388.8" y="706.2" width="2" height="2"/><rect x="1389.0" y="742.4" width="2" height="2"/><rect x="1389.5" y="815.3" width="2" height="2"/><rect x="1390.1" y="712.7" width="2" height="2"/><rect x="1390.5" y="728.2" width="2" height="2"/><rect x="1390.1" y="783.0" width="2" height="2"/><rect x="1390.5" y="758.0" width="2" height="2"/><rect x="1390.9" y="795.1" width="2" height="2"/><rect x="1391.3" y="737.8" width="2" height="2"/><rect x="1391.9" y="776.7" width="2" height="2"/><rect x="1391.8" y="680.5" width="2" height="2"/><rect x="1391.7" y="841.4" width="2" height="2"/><rect x="1392.0" y="707.7" width="2" height="2"/><rect x="1392.8" y="728.7" width="2" height="2"/><rect x="1393.4" y="777.8" width="2" height="2"/><rect x="1393.0" y="898.2" width="2" height="2"/><rect x="1393.2" y="757.7" width="2" height="2"/><rect x="1393.7" y="714.1" width="2" height="2"/><rect x="1393.8" y="814.2" width="2" height="2"/><rect x="1394.5" y="737.7" width="2" height="2"/><rect x="1395.0" y="737.7" width="2" height="2"/><rect x="1395.6" y="717.1" width="2" height="2"/><rect x="1395.1" y="731.7" width="2" height="2"/><rect x="1395.4" y="755.4" width="2" height="2"/><rect x="1396.3" y="755.8" width="2" height="2"/><rect x="1396.1" y="803.7" width="2" height="2"/><rect x="1396.8" y="772.5" width="2" height="2"/><rect x="1397.1" y="750.2" width="2" height="2"/><rect x="1397.1" y="723.6" width="2" height="2"/><rect x="1397.9" y="719.3" width="2" height="2"/><rect x="1398.3" y="835.3" width="2" height="2"/><rect x="1397.8" y="727.6" width="2" height="2"/><rect x="1398.5" y="758.3" width="2" height="2"/><rect x="1398.6" y="702.0" width="2" height="2"/><rect x="1399.4" y="744.8" width="2" height="2"/><rect x="1399.8" y="718.8" width="2" height="2"/><rect x="1399.8" y="757.1" width="2" height="2"/><rect x="1400.1" y="797.9" width="2" height="2"/><rect x="1400.3" y="716.1" width="2" height="2"/><rect x="1400.2" y="728.4" width="2" height="2"/><rect x="1401.3" y="704.0" width="2" height="2"/><rect x="1401.1" y="683.7" width="2" height="2"/><rect x="1401.2" y="719.8" width="2" height="2"/><rect x="1402.0" y="702.2" width="2" height="2"/><rect x="1401.6" y="772.6" width="2" height="2"/><rect x="1402.3" y="760.2" width="2" height="2"/><rect x="1402.6" y="722.6" width="2" height="2"/><rect x="1403.2" y="882.7" width="2" height="2"/><rect x="1403.5" y="848.8" width="2" height="2"/><rect x="1403.3" y="805.9" width="2" height="2"/><rect x="1403.4" y="720.3" width="2" height="2"/><rect x="1404.1" y="812.7" width="2" height="2"/><rect x="1404.7" y="728.0" width="2" height="2"/><rect x="1405.1" y="731.9" width="2" height="2"/><rect x="1405.4" y="754.1" width="2" height="2"/><rect x="1405.0" y="836.5" width="2" height="2"/><rect x="1405.3" y="750.2" width="2" height="2"/><rect x="1406.0" y="727.5" width="2" height="2"/><rect x="1406.5" y="750.7" width="2" height="2"/><rect x="1406.3" y="746.5" width="2" height="2"/><rect x="1407.1" y="768.4" width="2" height="2"/><rect x="1406.8" y="704.4" width="2" height="2"/><rect x="1407.8" y="712.3" width="2" height="2"/><rect x="1407.7" y="750.7" width="2" height="2"/><rect x="1408.0" y="799.5" width="2" height="2"/><rect x="1408.3" y="753.2" width="2" height="2"/><rect x="1409.0" y="884.1" width="2" height="2"/><rect x="1408.7" y="751.7" width="2" height="2"/><rect x="1409.2" y="719.2" width="2" height="2"/><rect x="1409.6" y="754.7" width="2" height="2"/><rect x="1409.8" y="848.2" width="2" height="2"/><rect x="1410.5" y="764.3" width="2" height="2"/><rect x="1410.1" y="700.3" width="2" height="2"/><rect x="1410.2" y="756.9" width="2" height="2"/><rect x="1411.2" y="761.8" width="2" height="2"/><rect x="1411.2" y="704.8" width="2" height="2"/><rect x="1411.2" y="778.2" width="2" height="2"/><rect x="1412.2" y="740.5" width="2" height="2"/><rect x="1412.4" y="819.5" width="2" height="2"/><rect x="1412.1" y="892.6" width="2" height="2"/><rect x="1412.9" y="794.2" width="2" height="2"/><rect x="1412.8" y="777.5" width="2" height="2"/><rect x="1412.9" y="740.4" width="2" height="2"/><rect x="1413.2" y="728.0" width="2" height="2"/><rect x="1413.6" y="752.8" width="2" height="2"/><rect x="1414.2" y="800.8" width="2" height="2"/><rect x="1414.4" y="761.8" width="2" height="2"/><rect x="1414.8" y="764.8" width="2" height="2"/><rect x="1414.8" y="810.5" width="2" height="2"/><rect x="1415.5" y="739.3" width="2" height="2"/><rect x="1416.0" y="750.8" width="2" height="2"/><rect x="1416.3" y="741.5" width="2" height="2"/><rect x="1416.5" y="793.5" width="2" height="2"/><rect x="1417.0" y="718.6" width="2" height="2"/><rect x="1416.7" y="778.8" width="2" height="2"/><rect x="1416.9" y="701.1" width="2" height="2"/><rect x="1417.8" y="663.7" width="2" height="2"/><rect x="1417.5" y="818.5" width="2" height="2"/><rect x="1417.8" y="728.9" width="2" height="2"/><rect x="1418.7" y="832.5" width="2" height="2"/><rect x="1418.9" y="764.1" width="2" height="2"/><rect x="1418.8" y="821.2" width="2" height="2"/><rect x="1418.8" y="733.7" width="2" height="2"/><rect x="1419.7" y="800.5" width="2" height="2"/><rect x="1420.3" y="703.5" width="2" height="2"/><rect x="1420.1" y="825.2" width="2" height="2"/><rect x="1420.4" y="725.4" width="2" height="2"/><rect x="1420.4" y="733.7" width="2" height="2"/><rect x="1420.6" y="846.3" width="2" height="2"/><rect x="1421.4" y="872.9" width="2" height="2"/><rect x="1421.7" y="753.0" width="2" height="2"/><rect x="1421.6" y="814.9" width="2" height="2"/><rect x="1422.5" y="800.1" width="2" height="2"/><rect x="1422.9" y="677.3" width="2" height="2"/><rect x="1422.4" y="833.7" width="2" height="2"/><rect x="1423.1" y="694.8" width="2" height="2"/><rect x="1423.2" y="724.9" width="2" height="2"/><rect x="1423.7" y="758.8" width="2" height="2"/><rect x="1424.1" y="763.5" width="2" height="2"/><rect x="1424.5" y="916.0" width="2" height="2"/><rect x="1424.3" y="714.8" width="2" height="2"/><rect x="1425.1" y="760.5" width="2" height="2"/><rect x="1424.9" y="766.8" width="2" height="2"/><rect x="1425.5" y="809.9" width="2" height="2"/><rect x="1426.2" y="909.9" width="2" height="2"/><rect x="1426.3" y="720.6" width="2" height="2"/><rect x="1426.5" y="712.5" width="2" height="2"/><rect x="1426.8" y="767.0" width="2" height="2"/><rect x="1427.4" y="754.7" width="2" height="2"/><rect x="1427.0" y="720.3" width="2" height="2"/><rect x="1427.8" y="704.2" width="2" height="2"/><rect x="1428.2" y="723.7" width="2" height="2"/><rect x="1428.6" y="767.0" width="2" height="2"/><rect x="1428.6" y="709.8" width="2" height="2"/><rect x="1429.0" y="725.0" width="2" height="2"/><rect x="1429.3" y="767.0" width="2" height="2"/><rect x="1429.2" y="847.0" width="2" height="2"/><rect x="1429.2" y="759.1" width="2" height="2"/><rect x="1430.1" y="774.0" width="2" height="2"/><rect x="1430.0" y="741.4" width="2" height="2"/><rect x="1430.7" y="697.2" width="2" height="2"/><rect x="1431.0" y="776.7" width="2" height="2"/><rect x="1431.2" y="747.6" width="2" height="2"/><rect x="1431.9" y="769.4" width="2" height="2"/><rect x="1431.9" y="739.5" width="2" height="2"/><rect x="1432.5" y="726.0" width="2" height="2"/><rect x="1432.4" y="894.3" width="2" height="2"/><rect x="1432.4" y="728.7" width="2" height="2"/><rect x="1432.5" y="767.9" width="2" height="2"/><rect x="1433.1" y="803.0" width="2" height="2"/><rect x="1433.3" y="833.2" width="2" height="2"/><rect x="1433.9" y="705.8" width="2" height="2"/><rect x="1434.6" y="754.9" width="2" height="2"/><rect x="1434.9" y="748.0" width="2" height="2"/><rect x="1435.0" y="740.3" width="2" height="2"/><rect x="1435.1" y="844.3" width="2" height="2"/><rect x="1434.8" y="726.6" width="2" height="2"/><rect x="1435.2" y="701.1" width="2" height="2"/><rect x="1435.6" y="759.3" width="2" height="2"/><rect x="1436.3" y="756.5" width="2" height="2"/><rect x="1436.9" y="855.5" width="2" height="2"/><rect x="1436.8" y="765.8" width="2" height="2"/><rect x="1436.9" y="744.9" width="2" height="2"/><rect x="1437.5" y="785.5" width="2" height="2"/><rect x="1437.5" y="749.1" width="2" height="2"/><rect x="1437.8" y="731.8" width="2" height="2"/><rect x="1438.0" y="914.9" width="2" height="2"/><rect x="1438.2" y="868.8" width="2" height="2"/><rect x="1438.7" y="727.4" width="2" height="2"/><rect x="1439.4" y="707.8" width="2" height="2"/><rect x="1439.9" y="862.3" width="2" height="2"/><rect x="1439.3" y="698.1" width="2" height="2"/><rect x="1440.0" y="706.4" width="2" height="2"/><rect x="1440.8" y="759.0" width="2" height="2"/><rect x="1440.7" y="793.4" width="2" height="2"/><rect x="1441.2" y="700.0" width="2" height="2"/><rect x="1441.7" y="760.2" width="2" height="2"/><rect x="1441.6" y="720.0" width="2" height="2"/><rect x="1442.0" y="827.2" width="2" height="2"/><rect x="1441.8" y="761.8" width="2" height="2"/><rect x="1442.5" y="861.0" width="2" height="2"/><rect x="1442.7" y="823.9" width="2" height="2"/><rect x="1443.0" y="737.7" width="2" height="2"/><rect x="1443.4" y="790.2" width="2" height="2"/><rect x="1443.9" y="766.5" width="2" height="2"/><rect x="1444.4" y="753.1" width="2" height="2"/><rect x="1444.4" y="696.3" width="2" height="2"/><rect x="1444.1" y="794.8" width="2" height="2"/><rect x="1445.1" y="709.1" width="2" height="2"/><rect x="1445.0" y="742.6" width="2" height="2"/><rect x="1445.6" y="788.7" width="2" height="2"/><rect x="1445.8" y="749.4" width="2" height="2"/><rect x="1446.2" y="741.8" width="2" height="2"/><rect x="1446.0" y="805.4" width="2" height="2"/><rect x="1447.0" y="686.5" width="2" height="2"/><rect x="1446.4" y="711.6" width="2" height="2"/><rect x="1447.0" y="854.9" width="2" height="2"/><rect x="1447.6" y="766.1" width="2" height="2"/><rect x="1447.8" y="832.7" width="2" height="2"/><rect x="1447.7" y="847.5" width="2" height="2"/><rect x="1448.4" y="737.2" width="2" height="2"/><rect x="1448.5" y="742.3" width="2" height="2"/><rect x="1448.7" y="759.7" width="2" height="2"/><rect x="1449.5" y="777.4" width="2" height="2"/><rect x="1449.1" y="717.7" width="2" height="2"/><rect x="1450.2" y="826.2" width="2" height="2"/><rect x="1450.4" y="743.2" width="2" height="2"/><rect x="1450.4" y="800.5" width="2" height="2"/><rect x="1451.1" y="791.6" width="2" height="2"/><rect x="1451.2" y="774.0" width="2" height="2"/><rect x="1451.2" y="680.8" width="2" height="2"/><rect x="1451.9" y="751.7" width="2" height="2"/><rect x="1451.9" y="704.5" width="2" height="2"/><rect x="1451.8" y="774.0" width="2" height="2"/><rect x="1452.1" y="712.6" width="2" height="2"/><rect x="1452.9" y="842.2" width="2" height="2"/><rect x="1453.3" y="759.3" width="2" height="2"/><rect x="1453.7" y="784.8" width="2" height="2"/><rect x="1453.4" y="846.0" width="2" height="2"/><rect x="1453.6" y="739.3" width="2" height="2"/><rect x="1454.5" y="784.0" width="2" height="2"/><rect x="1454.4" y="735.8" width="2" height="2"/><rect x="1454.8" y="818.9" width="2" height="2"/><rect x="1455.1" y="732.2" width="2" height="2"/><rect x="1455.7" y="827.5" width="2" height="2"/><rect x="1456.2" y="749.8" width="2" height="2"/><rect x="1456.5" y="700.7" width="2" height="2"/><rect x="1456.7" y="765.3" width="2" height="2"/><rect x="1456.5" y="784.1" width="2" height="2"/><rect x="1457.4" y="770.3" width="2" height="2"/><rect x="1457.0" y="709.8" width="2" height="2"/><rect x="1457.5" y="775.6" width="2" height="2"/><rect x="1457.8" y="775.4" width="2" height="2"/><rect x="1457.9" y="772.0" width="2" height="2"/><rect x="1458.8" y="750.6" width="2" height="2"/><rect x="1459.1" y="753.3" width="2" height="2"/><rect x="1458.8" y="750.8" width="2" height="2"/><rect x="1459.8" y="728.7" width="2" height="2"/><rect x="1459.2" y="788.2" width="2" height="2"/><rect x="1460.0" y="756.2" width="2" height="2"/><rect x="1460.7" y="750.4" width="2" height="2"/><rect x="1460.9" y="741.1" width="2" height="2"/><rect x="1460.9" y="853.9" width="2" height="2"/><rect x="1460.7" y="725.3" width="2" height="2"/><rect x="1461.7" y="843.6" width="2" height="2"/><rect x="1461.3" y="709.5" width="2" height="2"/><rect x="1461.7" y="743.1" width="2" height="2"/><rect x="1462.5" y="730.5" width="2" height="2"/><rect x="1462.4" y="795.0" width="2" height="2"/><rect x="1463.0" y="728.3" width="2" height="2"/><rect x="1463.1" y="728.4" width="2" height="2"/><rect x="1464.0" y="779.6" width="2" height="2"/><rect x="1463.8" y="739.0" width="2" height="2"/><rect x="1464.4" y="754.1" width="2" height="2"/><rect x="1464.8" y="735.0" width="2" height="2"/><rect x="1465.1" y="769.5" width="2" height="2"/><rect x="1465.4" y="739.7" width="2" height="2"/><rect x="1465.7" y="723.5" width="2" height="2"/><rect x="1466.1" y="711.6" width="2" height="2"/><rect x="1465.9" y="742.8" width="2" height="2"/><rect x="1466.5" y="735.0" width="2" height="2"/><rect x="1466.4" y="768.3" width="2" height="2"/><rect x="1467.0" y="818.9" width="2" height="2"/><rect x="1467.0" y="680.6" width="2" height="2"/><rect x="1467.1" y="812.9" width="2" height="2"/><rect x="1467.5" y="767.9" width="2" height="2"/><rect x="1467.6" y="692.8" width="2" height="2"/><rect x="1467.9" y="784.5" width="2" height="2"/><rect x="1468.9" y="742.1" width="2" height="2"/><rect x="1468.5" y="810.0" width="2" height="2"/><rect x="1469.3" y="763.8" width="2" height="2"/><rect x="1469.0" y="708.3" width="2" height="2"/><rect x="1469.5" y="832.1" width="2" height="2"/><rect x="1469.8" y="801.3" width="2" height="2"/><rect x="1470.5" y="734.5" width="2" height="2"/><rect x="1470.4" y="800.0" width="2" height="2"/><rect x="1470.6" y="789.3" width="2" height="2"/><rect x="1471.1" y="729.9" width="2" height="2"/><rect x="1471.9" y="753.5" width="2" height="2"/><rect x="1471.6" y="761.5" width="2" height="2"/><rect x="1472.6" y="712.4" width="2" height="2"/><rect x="1472.5" y="779.7" width="2" height="2"/><rect x="1472.7" y="697.5" width="2" height="2"/><rect x="1472.6" y="800.8" width="2" height="2"/><rect x="1473.6" y="700.3" width="2" height="2"/><rect x="1473.7" y="773.7" width="2" height="2"/><rect x="1473.7" y="757.4" width="2" height="2"/><rect x="1474.4" y="681.9" width="2" height="2"/><rect x="1474.0" y="797.6" width="2" height="2"/><rect x="1474.7" y="762.6" width="2" height="2"/><rect x="1475.3" y="725.5" width="2" height="2"/><rect x="1475.1" y="747.4" width="2" height="2"/><rect x="1475.5" y="816.6" width="2" height="2"/><rect x="1476.4" y="793.6" width="2" height="2"/><rect x="1476.5" y="757.6" width="2" height="2"/><rect x="1476.4" y="679.2" width="2" height="2"/><rect x="1476.6" y="755.5" width="2" height="2"/><rect x="1476.7" y="728.9" width="2" height="2"/><rect x="1477.9" y="722.5" width="2" height="2"/><rect x="1477.4" y="722.4" width="2" height="2"/><rect x="1478.3" y="791.9" width="2" height="2"/><rect x="1478.4" y="837.7" width="2" height="2"/><rect x="1479.2" y="763.5" width="2" height="2"/><rect x="1479.4" y="749.9" width="2" height="2"/><rect x="1479.6" y="786.3" width="2" height="2"/><rect x="1480.0" y="770.0" width="2" height="2"/><rect x="1480.2" y="840.7" width="2" height="2"/><rect x="1480.2" y="804.2" width="2" height="2"/><rect x="1480.1" y="756.9" width="2" height="2"/><rect x="1480.6" y="721.4" width="2" height="2"/><rect x="1480.7" y="785.3" width="2" height="2"/><rect x="1481.3" y="786.1" width="2" height="2"/><rect x="1481.5" y="735.8" width="2" height="2"/><rect x="1481.6" y="738.9" width="2" height="2"/><rect x="1482.2" y="773.2" width="2" height="2"/><rect x="1482.9" y="695.1" width="2" height="2"/><rect x="1482.4" y="742.7" width="2" height="2"/><rect x="1483.4" y="775.6" width="2" height="2"/><rect x="1483.5" y="798.4" width="2" height="2"/><rect x="1483.3" y="765.2" width="2" height="2"/><rect x="1484.4" y="681.5" width="2" height="2"/><rect x="1484.5" y="804.9" width="2" height="2"/><rect x="1484.5" y="788.9" width="2" height="2"/><rect x="1484.7" y="755.7" width="2" height="2"/><rect x="1485.1" y="781.5" width="2" height="2"/><rect x="1485.3" y="741.5" width="2" height="2"/><rect x="1486.1" y="806.5" width="2" height="2"/><rect x="1486.6" y="782.8" width="2" height="2"/><rect x="1486.7" y="753.2" width="2" height="2"/><rect x="1487.1" y="782.5" width="2" height="2"/><rect x="1486.7" y="840.7" width="2" height="2"/><rect x="1487.5" y="839.7" width="2" height="2"/><rect x="1487.3" y="737.1" width="2" height="2"/><rect x="1488.3" y="772.7" width="2" height="2"/><rect x="1487.8" y="750.0" width="2" height="2"/><rect x="1488.2" y="801.0" width="2" height="2"/><rect x="1488.7" y="828.0" width="2" height="2"/><rect x="1489.5" y="851.0" width="2" height="2"/><rect x="1489.4" y="769.6" width="2" height="2"/><rect x="1490.0" y="744.1" width="2" height="2"/><rect x="1489.9" y="723.6" width="2" height="2"/><rect x="1490.2" y="782.9" width="2" height="2"/><rect x="1490.5" y="915.5" width="2" height="2"/><rect x="1491.4" y="738.3" width="2" height="2"/><rect x="1491.3" y="727.8" width="2" height="2"/><rect x="1491.0" y="748.5" width="2" height="2"/><rect x="1491.6" y="783.1" width="2" height="2"/><rect x="1491.7" y="743.9" width="2" height="2"/><rect x="1492.4" y="776.4" width="2" height="2"/><rect x="1493.0" y="728.0" width="2" height="2"/><rect x="1492.6" y="748.3" width="2" height="2"/><rect x="1493.7" y="730.8" width="2" height="2"/><rect x="1493.4" y="755.4" width="2" height="2"/><rect x="1493.5" y="761.0" width="2" height="2"/><rect x="1494.6" y="737.0" width="2" height="2"/><rect x="1494.7" y="759.2" width="2" height="2"/><rect x="1494.5" y="722.1" width="2" height="2"/><rect x="1495.2" y="702.8" width="2" height="2"/><rect x="1494.9" y="807.8" width="2" height="2"/><rect x="1495.7" y="798.1" width="2" height="2"/><rect x="1495.8" y="739.0" width="2" height="2"/><rect x="1496.1" y="706.7" width="2" height="2"/><rect x="1496.2" y="765.7" width="2" height="2"/><rect x="1496.5" y="693.8" width="2" height="2"/><rect x="1497.2" y="711.7" width="2" height="2"/><rect x="1497.5" y="754.4" width="2" height="2"/><rect x="1498.1" y="794.6" width="2" height="2"/><rect x="1498.3" y="682.2" width="2" height="2"/><rect x="1497.9" y="749.9" width="2" height="2"/><rect x="1498.4" y="723.9" width="2" height="2"/><rect x="1498.7" y="713.1" width="2" height="2"/><rect x="1499.5" y="753.1" width="2" height="2"/><rect x="1499.6" y="811.1" width="2" height="2"/><rect x="1499.3" y="849.9" width="2" height="2"/><rect x="1500.6" y="812.5" width="2" height="2"/><rect x="1500.6" y="704.7" width="2" height="2"/><rect x="1500.9" y="787.5" width="2" height="2"/><rect x="1500.9" y="734.9" width="2" height="2"/><rect x="1501.6" y="751.2" width="2" height="2"/><rect x="1501.3" y="914.1" width="2" height="2"/><rect x="1501.5" y="765.6" width="2" height="2"/><rect x="1502.3" y="776.0" width="2" height="2"/><rect x="1502.5" y="814.4" width="2" height="2"/><rect x="1502.9" y="795.1" width="2" height="2"/><rect x="1503.2" y="783.9" width="2" height="2"/><rect x="1503.5" y="879.6" width="2" height="2"/><rect x="1504.1" y="822.6" width="2" height="2"/><rect x="1503.9" y="750.5" width="2" height="2"/><rect x="1504.4" y="772.9" width="2" height="2"/><rect x="1504.8" y="740.7" width="2" height="2"/><rect x="1504.9" y="733.6" width="2" height="2"/><rect x="1505.5" y="679.7" width="2" height="2"/><rect x="1505.4" y="720.3" width="2" height="2"/><rect x="1505.8" y="770.1" width="2" height="2"/><rect x="1506.1" y="712.2" width="2" height="2"/><rect x="1506.3" y="759.2" width="2" height="2"/><rect x="1506.5" y="712.5" width="2" height="2"/><rect x="1507.2" y="864.6" width="2" height="2"/><rect x="1507.5" y="713.3" width="2" height="2"/><rect x="1507.8" y="751.1" width="2" height="2"/><rect x="1507.9" y="788.6" width="2" height="2"/><rect x="1507.8" y="854.4" width="2" height="2"/><rect x="1508.4" y="768.7" width="2" height="2"/><rect x="1508.3" y="775.2" width="2" height="2"/><rect x="1509.1" y="740.4" width="2" height="2"/><rect x="1509.1" y="800.3" width="2" height="2"/><rect x="1509.4" y="775.5" width="2" height="2"/><rect x="1510.3" y="855.4" width="2" height="2"/><rect x="1510.4" y="697.7" width="2" height="2"/><rect x="1510.4" y="719.0" width="2" height="2"/><rect x="1510.5" y="727.5" width="2" height="2"/><rect x="1511.2" y="734.7" width="2" height="2"/><rect x="1511.0" y="713.0" width="2" height="2"/><rect x="1511.3" y="729.2" width="2" height="2"/><rect x="1512.5" y="758.3" width="2" height="2"/><rect x="1512.1" y="799.7" width="2" height="2"/><rect x="1512.2" y="785.8" width="2" height="2"/><rect x="1513.2" y="714.6" width="2" height="2"/><rect x="1513.0" y="775.5" width="2" height="2"/><rect x="1513.0" y="753.0" width="2" height="2"/><rect x="1514.2" y="888.6" width="2" height="2"/><rect x="1514.1" y="788.6" width="2" height="2"/><rect x="1514.9" y="707.2" width="2" height="2"/><rect x="1514.4" y="766.1" width="2" height="2"/><rect x="1515.4" y="790.7" width="2" height="2"/><rect x="1515.0" y="714.6" width="2" height="2"/><rect x="1515.4" y="723.6" width="2" height="2"/><rect x="1515.5" y="766.2" width="2" height="2"/><rect x="1516.7" y="717.5" width="2" height="2"/><rect x="1516.6" y="808.8" width="2" height="2"/><rect x="1517.1" y="811.2" width="2" height="2"/><rect x="1516.7" y="869.2" width="2" height="2"/><rect x="1517.2" y="737.7" width="2" height="2"/><rect x="1518.0" y="714.1" width="2" height="2"/><rect x="1517.6" y="739.2" width="2" height="2"/><rect x="1518.7" y="741.1" width="2" height="2"/><rect x="1518.1" y="769.8" width="2" height="2"/><rect x="1518.6" y="804.4" width="2" height="2"/><rect x="1518.8" y="739.6" width="2" height="2"/><rect x="1519.2" y="814.0" width="2" height="2"/><rect x="1520.0" y="744.8" width="2" height="2"/><rect x="1520.2" y="779.5" width="2" height="2"/><rect x="1520.4" y="717.1" width="2" height="2"/><rect x="1520.4" y="803.3" width="2" height="2"/><rect x="1521.1" y="709.3" width="2" height="2"/><rect x="1521.4" y="794.4" width="2" height="2"/><rect x="1522.0" y="844.8" width="2" height="2"/><rect x="1521.8" y="770.7" width="2" height="2"/><rect x="1521.7" y="759.9" width="2" height="2"/><rect x="1522.2" y="752.2" width="2" height="2"/><rect x="1523.0" y="799.2" width="2" height="2"/><rect x="1522.8" y="846.3" width="2" height="2"/><rect x="1523.0" y="734.7" width="2" height="2"/><rect x="1523.6" y="794.2" width="2" height="2"/><rect x="1524.3" y="813.1" width="2" height="2"/><rect x="1523.7" y="688.4" width="2" height="2"/><rect x="1524.7" y="768.3" width="2" height="2"/><rect x="1525.2" y="778.2" width="2" height="2"/><rect x="1524.8" y="763.8" width="2" height="2"/><rect x="1525.5" y="757.4" width="2" height="2"/><rect x="1525.8" y="781.8" width="2" height="2"/><rect x="1526.0" y="731.6" width="2" height="2"/><rect x="1526.6" y="763.2" width="2" height="2"/><rect x="1526.6" y="743.2" width="2" height="2"/><rect x="1526.5" y="703.9" width="2" height="2"/><rect x="1526.8" y="732.2" width="2" height="2"/><rect x="1527.2" y="751.7" width="2" height="2"/><rect x="1528.0" y="771.2" width="2" height="2"/><rect x="1528.3" y="731.4" width="2" height="2"/><rect x="1528.3" y="802.6" width="2" height="2"/><rect x="1528.7" y="805.6" width="2" height="2"/><rect x="1528.5" y="764.2" width="2" height="2"/><rect x="1529.5" y="753.1" width="2" height="2"/><rect x="1529.9" y="755.8" width="2" height="2"/><rect x="1529.5" y="815.2" width="2" height="2"/><rect x="1530.1" y="913.1" width="2" height="2"/><rect x="1530.4" y="772.2" width="2" height="2"/><rect x="1531.0" y="797.7" width="2" height="2"/><rect x="1531.4" y="854.8" width="2" height="2"/><rect x="1531.4" y="756.4" width="2" height="2"/><rect x="1531.4" y="731.1" width="2" height="2"/><rect x="1531.7" y="824.6" width="2" height="2"/><rect x="1532.0" y="877.5" width="2" height="2"/><rect x="1532.5" y="750.7" width="2" height="2"/><rect x="1532.9" y="797.6" width="2" height="2"/><rect x="1533.4" y="846.5" width="2" height="2"/><rect x="1533.2" y="817.6" width="2" height="2"/><rect x="1533.9" y="820.8" width="2" height="2"/><rect x="1534.3" y="726.2" width="2" height="2"/><rect x="1534.2" y="862.3" width="2" height="2"/><rect x="1534.3" y="781.9" width="2" height="2"/><rect x="1534.4" y="698.4" width="2" height="2"/><rect x="1535.5" y="765.9" width="2" height="2"/><rect x="1535.1" y="690.5" width="2" height="2"/><rect x="1536.0" y="770.1" width="2" height="2"/><rect x="1535.8" y="881.0" width="2" height="2"/><rect x="1536.0" y="717.5" width="2" height="2"/><rect x="1536.5" y="778.2" width="2" height="2"/><rect x="1536.6" y="774.1" width="2" height="2"/><rect x="1537.8" y="886.7" width="2" height="2"/><rect x="1537.8" y="735.0" width="2" height="2"/><rect x="1537.6" y="804.7" width="2" height="2"/><rect x="1537.9" y="758.9" width="2" height="2"/><rect x="1538.9" y="769.6" width="2" height="2"/><rect x="1538.6" y="782.3" width="2" height="2"/><rect x="1539.2" y="693.8" width="2" height="2"/><rect x="1539.3" y="880.8" width="2" height="2"/><rect x="1539.2" y="748.2" width="2" height="2"/><rect x="1540.1" y="785.5" width="2" height="2"/><rect x="1540.3" y="722.0" width="2" height="2"/><rect x="1540.5" y="718.5" width="2" height="2"/><rect x="1541.2" y="778.5" width="2" height="2"/><rect x="1541.4" y="780.2" width="2" height="2"/><rect x="1541.3" y="808.0" width="2" height="2"/><rect x="1541.8" y="815.3" width="2" height="2"/><rect x="1541.7" y="820.4" width="2" height="2"/><rect x="1542.3" y="808.3" width="2" height="2"/><rect x="1542.6" y="791.0" width="2" height="2"/><rect x="1543.1" y="684.7" width="2" height="2"/><rect x="1542.9" y="722.5" width="2" height="2"/><rect x="1543.1" y="780.1" width="2" height="2"/><rect x="1543.7" y="743.9" width="2" height="2"/><rect x="1543.6" y="796.8" width="2" height="2"/><rect x="1544.2" y="815.9" width="2" height="2"/><rect x="1545.1" y="778.9" width="2" height="2"/><rect x="1544.8" y="741.3" width="2" height="2"/><rect x="1545.0" y="783.3" width="2" height="2"/><rect x="1545.5" y="709.3" width="2" height="2"/><rect x="1546.1" y="735.5" width="2" height="2"/><rect x="1545.7" y="715.4" width="2" height="2"/><rect x="1546.4" y="789.2" width="2" height="2"/><rect x="1547.2" y="850.3" width="2" height="2"/><rect x="1547.4" y="788.8" width="2" height="2"/><rect x="1546.9" y="763.5" width="2" height="2"/><rect x="1547.4" y="779.0" width="2" height="2"/><rect x="1547.6" y="880.3" width="2" height="2"/><rect x="1547.8" y="754.9" width="2" height="2"/><rect x="1548.5" y="790.9" width="2" height="2"/><rect x="1548.5" y="760.8" width="2" height="2"/><rect x="1548.9" y="742.6" width="2" height="2"/><rect x="1549.6" y="740.5" width="2" height="2"/><rect x="1549.5" y="825.9" width="2" height="2"/><rect x="1550.3" y="796.3" width="2" height="2"/><rect x="1550.2" y="777.7" width="2" height="2"/><rect x="1550.4" y="722.6" width="2" height="2"/><rect x="1550.8" y="794.4" width="2" height="2"/><rect x="1550.8" y="808.8" width="2" height="2"/><rect x="1551.7" y="901.8" width="2" height="2"/><rect x="1552.2" y="758.6" width="2" height="2"/><rect x="1551.9" y="697.7" width="2" height="2"/><rect x="1552.9" y="747.0" width="2" height="2"/><rect x="1552.9" y="808.8" width="2" height="2"/><rect x="1553.5" y="747.5" width="2" height="2"/><rect x="1553.1" y="722.5" width="2" height="2"/><rect x="1553.2" y="751.3" width="2" height="2"/><rect x="1553.8" y="775.1" width="2" height="2"/><rect x="1554.1" y="864.7" width="2" height="2"/><rect x="1554.5" y="789.0" width="2" height="2"/><rect x="1554.5" y="796.8" width="2" height="2"/><rect x="1555.1" y="778.5" width="2" height="2"/><rect x="1555.6" y="820.8" width="2" height="2"/><rect x="1555.3" y="804.3" width="2" height="2"/><rect x="1555.9" y="787.1" width="2" height="2"/><rect x="1556.4" y="825.4" width="2" height="2"/><rect x="1556.7" y="743.9" width="2" height="2"/><rect x="1556.4" y="744.0" width="2" height="2"/><rect x="1557.1" y="780.2" width="2" height="2"/><rect x="1557.4" y="863.1" width="2" height="2"/><rect x="1557.8" y="869.1" width="2" height="2"/><rect x="1558.1" y="756.9" width="2" height="2"/><rect x="1558.1" y="789.7" width="2" height="2"/><rect x="1558.5" y="904.1" width="2" height="2"/><rect x="1559.0" y="719.2" width="2" height="2"/><rect x="1559.4" y="800.4" width="2" height="2"/><rect x="1559.5" y="816.3" width="2" height="2"/><rect x="1560.3" y="753.8" width="2" height="2"/><rect x="1560.2" y="784.4" width="2" height="2"/><rect x="1560.7" y="709.2" width="2" height="2"/><rect x="1560.9" y="752.5" width="2" height="2"/><rect x="1561.0" y="777.9" width="2" height="2"/><rect x="1561.7" y="798.0" width="2" height="2"/><rect x="1561.5" y="721.5" width="2" height="2"/><rect x="1561.5" y="716.3" width="2" height="2"/><rect x="1562.3" y="830.5" width="2" height="2"/><rect x="1562.4" y="792.7" width="2" height="2"/><rect x="1562.5" y="698.0" width="2" height="2"/><rect x="1562.9" y="815.1" width="2" height="2"/><rect x="1563.2" y="746.9" width="2" height="2"/><rect x="1563.6" y="762.1" width="2" height="2"/><rect x="1564.0" y="805.1" width="2" height="2"/><rect x="1564.4" y="750.3" width="2" height="2"/><rect x="1564.7" y="753.2" width="2" height="2"/><rect x="1565.4" y="728.9" width="2" height="2"/><rect x="1565.1" y="789.1" width="2" height="2"/><rect x="1565.3" y="720.7" width="2" height="2"/><rect x="1566.0" y="743.0" width="2" height="2"/><rect x="1566.6" y="746.4" width="2" height="2"/><rect x="1566.1" y="729.9" width="2" height="2"/><rect x="1566.7" y="753.6" width="2" height="2"/><rect x="1566.9" y="760.1" width="2" height="2"/><rect x="1567.6" y="796.9" width="2" height="2"/><rect x="1567.3" y="763.6" width="2" height="2"/><rect x="1567.7" y="803.5" width="2" height="2"/><rect x="1568.2" y="819.1" width="2" height="2"/><rect x="1568.1" y="834.3" width="2" height="2"/><rect x="1568.4" y="860.4" width="2" height="2"/><rect x="1568.7" y="744.6" width="2" height="2"/><rect x="1569.7" y="773.5" width="2" height="2"/><rect x="1569.3" y="770.0" width="2" height="2"/><rect x="1570.3" y="724.3" width="2" height="2"/><rect x="1570.0" y="871.1" width="2" height="2"/><rect x="1570.9" y="766.9" width="2" height="2"/><rect x="1571.1" y="781.3" width="2" height="2"/><rect x="1571.4" y="803.3" width="2" height="2"/><rect x="1571.3" y="790.7" width="2" height="2"/><rect x="1572.1" y="738.5" width="2" height="2"/><rect x="1572.1" y="729.8" width="2" height="2"/><rect x="1572.6" y="777.7" width="2" height="2"/><rect x="1573.0" y="754.0" width="2" height="2"/><rect x="1572.6" y="733.5" width="2" height="2"/><rect x="1573.4" y="783.6" width="2" height="2"/><rect x="1573.2" y="807.6" width="2" height="2"/><rect x="1574.3" y="758.3" width="2" height="2"/><rect x="1573.8" y="701.8" width="2" height="2"/><rect x="1574.4" y="747.0" width="2" height="2"/><rect x="1574.6" y="753.3" width="2" height="2"/><rect x="1575.5" y="712.6" width="2" height="2"/><rect x="1575.5" y="875.4" width="2" height="2"/><rect x="1575.2" y="837.7" width="2" height="2"/><rect x="1576.2" y="797.6" width="2" height="2"/><rect x="1575.8" y="687.3" width="2" height="2"/><rect x="1576.0" y="790.6" width="2" height="2"/><rect x="1576.8" y="763.4" width="2" height="2"/><rect x="1576.9" y="784.4" width="2" height="2"/><rect x="1577.8" y="734.0" width="2" height="2"/><rect x="1577.6" y="798.2" width="2" height="2"/><rect x="1578.3" y="755.1" width="2" height="2"/><rect x="1578.2" y="697.4" width="2" height="2"/><rect x="1578.6" y="746.6" width="2" height="2"/><rect x="1578.5" y="734.1" width="2" height="2"/><rect x="1578.8" y="820.7" width="2" height="2"/><rect x="1579.2" y="713.0" width="2" height="2"/><rect x="1579.4" y="770.0" width="2" height="2"/><rect x="1579.6" y="791.9" width="2" height="2"/><rect x="1580.0" y="761.1" width="2" height="2"/><rect x="1580.5" y="754.5" width="2" height="2"/><rect x="1581.0" y="808.9" width="2" height="2"/><rect x="1581.0" y="785.8" width="2" height="2"/><rect x="1581.1" y="873.8" width="2" height="2"/><rect x="1581.7" y="721.1" width="2" height="2"/><rect x="1581.9" y="855.9" width="2" height="2"/><rect x="1583.0" y="770.8" width="2" height="2"/><rect x="1583.1" y="814.5" width="2" height="2"/><rect x="1583.0" y="770.7" width="2" height="2"/><rect x="1583.3" y="733.7" width="2" height="2"/><rect x="1583.7" y="869.1" width="2" height="2"/><rect x="1584.1" y="751.2" width="2" height="2"/><rect x="1584.7" y="799.9" width="2" height="2"/><rect x="1585.0" y="725.8" width="2" height="2"/><rect x="1585.2" y="775.9" width="2" height="2"/><rect x="1584.8" y="743.7" width="2" height="2"/><rect x="1585.1" y="901.1" width="2" height="2"/><rect x="1585.3" y="838.4" width="2" height="2"/><rect x="1586.3" y="787.2" width="2" height="2"/><rect x="1586.3" y="794.6" width="2" height="2"/><rect x="1587.1" y="813.1" width="2" height="2"/><rect x="1587.2" y="766.0" width="2" height="2"/><rect x="1587.5" y="735.9" width="2" height="2"/><rect x="1587.8" y="781.8" width="2" height="2"/><rect x="1588.1" y="731.3" width="2" height="2"/><rect x="1587.7" y="695.3" width="2" height="2"/><rect x="1588.3" y="709.6" width="2" height="2"/><rect x="1588.5" y="746.3" width="2" height="2"/><rect x="1588.5" y="718.7" width="2" height="2"/><rect x="1589.0" y="760.6" width="2" height="2"/><rect x="1589.5" y="783.4" width="2" height="2"/><rect x="1590.2" y="751.8" width="2" height="2"/><rect x="1590.3" y="786.8" width="2" height="2"/><rect x="1590.3" y="788.3" width="2" height="2"/><rect x="1590.6" y="719.7" width="2" height="2"/><rect x="1590.9" y="848.9" width="2" height="2"/><rect x="1591.1" y="742.3" width="2" height="2"/><rect x="1591.7" y="742.2" width="2" height="2"/><rect x="1591.7" y="749.4" width="2" height="2"/><rect x="1591.9" y="844.0" width="2" height="2"/><rect x="1592.5" y="789.0" width="2" height="2"/><rect x="1592.8" y="769.4" width="2" height="2"/><rect x="1593.2" y="793.4" width="2" height="2"/><rect x="1593.2" y="709.5" width="2" height="2"/><rect x="1593.6" y="724.1" width="2" height="2"/><rect x="1593.7" y="741.1" width="2" height="2"/><rect x="1594.3" y="694.7" width="2" height="2"/><rect x="1594.4" y="706.4" width="2" height="2"/><rect x="1595.2" y="781.2" width="2" height="2"/><rect x="1595.0" y="821.4" width="2" height="2"/><rect x="1596.0" y="750.0" width="2" height="2"/><rect x="1595.5" y="793.5" width="2" height="2"/><rect x="1596.6" y="788.3" width="2" height="2"/><rect x="1596.6" y="829.7" width="2" height="2"/><rect x="1596.9" y="785.5" width="2" height="2"/><rect x="1597.2" y="813.5" width="2" height="2"/><rect x="1597.7" y="723.3" width="2" height="2"/><rect x="1597.6" y="755.6" width="2" height="2"/><rect x="1597.5" y="762.4" width="2" height="2"/><rect x="1598.4" y="730.9" width="2" height="2"/><rect x="1598.7" y="775.8" width="2" height="2"/><rect x="1598.7" y="780.1" width="2" height="2"/><rect x="1599.2" y="810.0" width="2" height="2"/><rect x="1599.4" y="762.0" width="2" height="2"/><rect x="1599.8" y="894.7" width="2" height="2"/><rect x="1600.1" y="776.8" width="2" height="2"/><rect x="1600.7" y="759.6" width="2" height="2"/><rect x="1600.6" y="828.9" width="2" height="2"/><rect x="1601.1" y="690.3" width="2" height="2"/><rect x="1601.4" y="795.4" width="2" height="2"/><rect x="1601.4" y="693.8" width="2" height="2"/><rect x="1601.4" y="726.9" width="2" height="2"/><rect x="1602.1" y="693.3" width="2" height="2"/><rect x="1602.7" y="809.5" width="2" height="2"/><rect x="1603.1" y="753.7" width="2" height="2"/><rect x="1603.3" y="732.4" width="2" height="2"/><rect x="1603.8" y="769.3" width="2" height="2"/><rect x="1603.9" y="865.9" width="2" height="2"/><rect x="1603.6" y="746.9" width="2" height="2"/><rect x="1604.1" y="735.5" width="2" height="2"/><rect x="1604.8" y="766.5" width="2" height="2"/><rect x="1604.5" y="817.9" width="2" height="2"/><rect x="1604.6" y="754.6" width="2" height="2"/><rect x="1605.6" y="764.5" width="2" height="2"/><rect x="1605.4" y="771.9" width="2" height="2"/><rect x="1606.3" y="736.5" width="2" height="2"/><rect x="1606.3" y="740.2" width="2" height="2"/><rect x="1606.8" y="721.0" width="2" height="2"/><rect x="1606.7" y="829.5" width="2" height="2"/><rect x="1606.7" y="847.6" width="2" height="2"/><rect x="1607.8" y="791.0" width="2" height="2"/><rect x="1607.4" y="732.2" width="2" height="2"/><rect x="1607.9" y="821.6" width="2" height="2"/><rect x="1608.5" y="730.1" width="2" height="2"/><rect x="1608.2" y="721.8" width="2" height="2"/><rect x="1608.6" y="695.7" width="2" height="2"/><rect x="1609.6" y="756.5" width="2" height="2"/><rect x="1609.2" y="745.5" width="2" height="2"/><rect x="1609.8" y="752.2" width="2" height="2"/><rect x="1609.9" y="792.1" width="2" height="2"/><rect x="1610.2" y="756.6" width="2" height="2"/><rect x="1610.9" y="759.6" width="2" height="2"/><rect x="1610.6" y="822.1" width="2" height="2"/><rect x="1611.3" y="749.5" width="2" height="2"/><rect x="1611.2" y="837.1" width="2" height="2"/><rect x="1612.0" y="714.0" width="2" height="2"/><rect x="1611.9" y="789.7" width="2" height="2"/><rect x="1612.7" y="688.8" width="2" height="2"/><rect x="1612.7" y="744.8" width="2" height="2"/><rect x="1613.0" y="796.9" width="2" height="2"/><rect x="1613.5" y="831.7" width="2" height="2"/><rect x="1614.0" y="780.7" width="2" height="2"/><rect x="1613.9" y="782.8" width="2" height="2"/><rect x="1614.7" y="770.8" width="2" height="2"/><rect x="1614.8" y="791.5" width="2" height="2"/><rect x="1615.0" y="810.4" width="2" height="2"/><rect x="1615.5" y="801.3" width="2" height="2"/><rect x="1615.8" y="801.0" width="2" height="2"/><rect x="1615.7" y="751.8" width="2" height="2"/><rect x="1616.0" y="716.1" width="2" height="2"/><rect x="1616.5" y="744.3" width="2" height="2"/><rect x="1616.2" y="778.0" width="2" height="2"/><rect x="1616.7" y="781.8" width="2" height="2"/><rect x="1617.7" y="779.0" width="2" height="2"/><rect x="1617.7" y="800.1" width="2" height="2"/><rect x="1617.6" y="752.5" width="2" height="2"/><rect x="1617.8" y="782.8" width="2" height="2"/><rect x="1618.2" y="723.8" width="2" height="2"/><rect x="1618.6" y="781.7" width="2" height="2"/><rect x="1619.4" y="735.0" width="2" height="2"/><rect x="1619.4" y="761.7" width="2" height="2"/><rect x="1620.0" y="849.1" width="2" height="2"/><rect x="1619.8" y="854.1" width="2" height="2"/><rect x="1620.4" y="788.0" width="2" height="2"/><rect x="1620.4" y="753.1" width="2" height="2"/><rect x="1621.3" y="723.6" width="2" height="2"/><rect x="1621.3" y="910.1" width="2" height="2"/><rect x="1621.3" y="775.9" width="2" height="2"/><rect x="1621.5" y="776.4" width="2" height="2"/><rect x="1622.1" y="753.0" width="2" height="2"/><rect x="1622.8" y="706.1" width="2" height="2"/><rect x="1622.5" y="692.6" width="2" height="2"/><rect x="1623.1" y="734.3" width="2" height="2"/><rect x="1623.7" y="749.7" width="2" height="2"/><rect x="1623.5" y="866.5" width="2" height="2"/><rect x="1624.0" y="784.7" width="2" height="2"/><rect x="1624.6" y="814.7" width="2" height="2"/><rect x="1624.3" y="816.6" width="2" height="2"/><rect x="1624.6" y="833.7" width="2" height="2"/><rect x="1624.6" y="745.2" width="2" height="2"/><rect x="1625.4" y="826.9" width="2" height="2"/><rect x="1625.8" y="758.7" width="2" height="2"/><rect x="1626.2" y="807.8" width="2" height="2"/><rect x="1626.4" y="746.6" width="2" height="2"/><rect x="1626.4" y="841.7" width="2" height="2"/><rect x="1627.2" y="730.2" width="2" height="2"/><rect x="1626.6" y="724.5" width="2" height="2"/><rect x="1627.4" y="792.0" width="2" height="2"/><rect x="1627.3" y="768.9" width="2" height="2"/><rect x="1627.8" y="739.8" width="2" height="2"/><rect x="1627.9" y="772.0" width="2" height="2"/><rect x="1628.2" y="765.1" width="2" height="2"/><rect x="1628.9" y="854.9" width="2" height="2"/><rect x="1629.4" y="801.0" width="2" height="2"/><rect x="1629.4" y="809.4" width="2" height="2"/><rect x="1629.5" y="875.6" width="2" height="2"/><rect x="1630.1" y="778.8" width="2" height="2"/><rect x="1630.7" y="777.9" width="2" height="2"/><rect x="1631.0" y="848.0" width="2" height="2"/><rect x="1631.4" y="830.7" width="2" height="2"/><rect x="1631.1" y="770.2" width="2" height="2"/><rect x="1631.9" y="760.4" width="2" height="2"/><rect x="1631.7" y="709.3" width="2" height="2"/><rect x="1632.4" y="831.2" width="2" height="2"/><rect x="1632.6" y="746.7" width="2" height="2"/><rect x="1632.7" y="830.4" width="2" height="2"/><rect x="1632.6" y="902.6" width="2" height="2"/><rect x="1633.8" y="800.2" width="2" height="2"/><rect x="1634.0" y="757.1" width="2" height="2"/><rect x="1633.8" y="882.8" width="2" height="2"/><rect x="1634.0" y="860.5" width="2" height="2"/><rect x="1634.9" y="845.3" width="2" height="2"/><rect x="1634.8" y="795.9" width="2" height="2"/><rect x="1635.5" y="756.0" width="2" height="2"/><rect x="1635.5" y="714.7" width="2" height="2"/><rect x="1636.1" y="773.4" width="2" height="2"/><rect x="1635.8" y="786.7" width="2" height="2"/><rect x="1636.0" y="746.5" width="2" height="2"/><rect x="1636.5" y="790.4" width="2" height="2"/><rect x="1636.7" y="776.3" width="2" height="2"/><rect x="1637.1" y="782.1" width="2" height="2"/><rect x="1637.8" y="880.1" width="2" height="2"/><rect x="1637.8" y="870.9" width="2" height="2"/><rect x="1638.0" y="768.2" width="2" height="2"/><rect x="1638.0" y="815.0" width="2" height="2"/><rect x="1638.5" y="790.0" width="2" height="2"/><rect x="1638.7" y="775.6" width="2" height="2"/><rect x="1639.2" y="745.6" width="2" height="2"/><rect x="1640.0" y="785.4" width="2" height="2"/><rect x="1640.3" y="763.2" width="2" height="2"/><rect x="1640.2" y="791.0" width="2" height="2"/><rect x="1640.2" y="790.6" width="2" height="2"/><rect x="1640.8" y="761.5" width="2" height="2"/><rect x="1641.0" y="798.6" width="2" height="2"/><rect x="1641.6" y="772.1" width="2" height="2"/><rect x="1641.2" y="877.6" width="2" height="2"/><rect x="1641.7" y="809.5" width="2" height="2"/><rect x="1642.2" y="740.3" width="2" height="2"/><rect x="1642.4" y="731.6" width="2" height="2"/><rect x="1643.0" y="803.5" width="2" height="2"/><rect x="1643.6" y="857.6" width="2" height="2"/><rect x="1643.2" y="735.7" width="2" height="2"/><rect x="1644.0" y="798.5" width="2" height="2"/><rect x="1644.2" y="741.3" width="2" height="2"/><rect x="1644.6" y="875.0" width="2" height="2"/><rect x="1644.7" y="882.1" width="2" height="2"/><rect x="1645.3" y="768.3" width="2" height="2"/><rect x="1644.7" y="758.6" width="2" height="2"/><rect x="1645.8" y="718.6" width="2" height="2"/><rect x="1645.3" y="765.2" width="2" height="2"/><rect x="1646.0" y="747.7" width="2" height="2"/><rect x="1646.9" y="754.2" width="2" height="2"/><rect x="1646.3" y="722.4" width="2" height="2"/><rect x="1646.9" y="742.4" width="2" height="2"/><rect x="1647.2" y="746.0" width="2" height="2"/><rect x="1647.5" y="780.8" width="2" height="2"/><rect x="1647.7" y="844.2" width="2" height="2"/><rect x="1647.7" y="748.1" width="2" height="2"/><rect x="1648.8" y="845.0" width="2" height="2"/><rect x="1648.8" y="755.9" width="2" height="2"/><rect x="1648.7" y="846.0" width="2" height="2"/><rect x="1649.8" y="800.1" width="2" height="2"/><rect x="1650.1" y="767.8" width="2" height="2"/><rect x="1649.9" y="818.4" width="2" height="2"/><rect x="1650.6" y="770.5" width="2" height="2"/><rect x="1650.9" y="842.5" width="2" height="2"/><rect x="1650.4" y="778.1" width="2" height="2"/><rect x="1651.0" y="783.1" width="2" height="2"/><rect x="1651.9" y="755.2" width="2" height="2"/><rect x="1651.9" y="775.6" width="2" height="2"/><rect x="1652.3" y="788.9" width="2" height="2"/><rect x="1652.6" y="849.5" width="2" height="2"/><rect x="1652.7" y="829.4" width="2" height="2"/><rect x="1652.8" y="820.7" width="2" height="2"/><rect x="1653.1" y="830.2" width="2" height="2"/><rect x="1653.5" y="764.6" width="2" height="2"/><rect x="1653.9" y="789.0" width="2" height="2"/><rect x="1654.0" y="735.1" width="2" height="2"/><rect x="1654.4" y="765.5" width="2" height="2"/><rect x="1654.5" y="704.3" width="2" height="2"/><rect x="1654.7" y="752.9" width="2" height="2"/><rect x="1655.5" y="808.9" width="2" height="2"/><rect x="1655.4" y="766.6" width="2" height="2"/><rect x="1656.2" y="870.9" width="2" height="2"/><rect x="1656.4" y="790.7" width="2" height="2"/><rect x="1656.6" y="783.5" width="2" height="2"/><rect x="1360.7" y="939.8" width="2" height="2"/><rect x="1432.9" y="936.0" width="2" height="2"/><rect x="1464.0" y="923.0" width="2" height="2"/><rect x="1581.0" y="932.8" width="2" height="2"/><rect x="1598.0" y="933.5" width="2" height="2"/><rect x="1610.0" y="951.7" width="2" height="2"/><rect x="1626.9" y="948.2" width="2" height="2"/><rect x="1470.3" y="1035.6" width="2" height="2"/><rect x="1595.5" y="1075.0" width="2" height="2"/><rect x="1613.7" y="918.6" width="2" height="2"/><rect x="1634.0" y="914.9" width="2" height="2"/></g>
<path d="M1353.0 722.5H1361.8L1357.4 731.0Z" fill="none" stroke="#1a1a9a" stroke-width="1.5" stroke-linejoin="miter"/>
<path d="M1380.6 704.7H1389.4L1385.0 714.0Z" fill="none" stroke="#cc2a10" stroke-width="1.5" stroke-linejoin="miter"/>
<path d="M1412.8 811.7H1421.6L1417.2 820.5Z" fill="none" stroke="#30e030" stroke-width="1.5" stroke-linejoin="miter"/></svg>
<div class="t" style="left:788.3px;top:68.80px;font-size:13px;line-height:16px;color:#000;">S11 Smith Chart</div>
<div class="t" style="left:1325.3px;top:68.80px;font-size:13px;line-height:16px;color:#000;">S11 Return Loss (dB)</div>
<div class="t" style="left:788.3px;top:605.40px;font-size:13px;line-height:16px;color:#000;">S21 Polar Plot</div>
<div class="t" style="left:1325.3px;top:605.40px;font-size:13px;line-height:16px;color:#000;">S21 Gain (dB)</div>
</body></html>
